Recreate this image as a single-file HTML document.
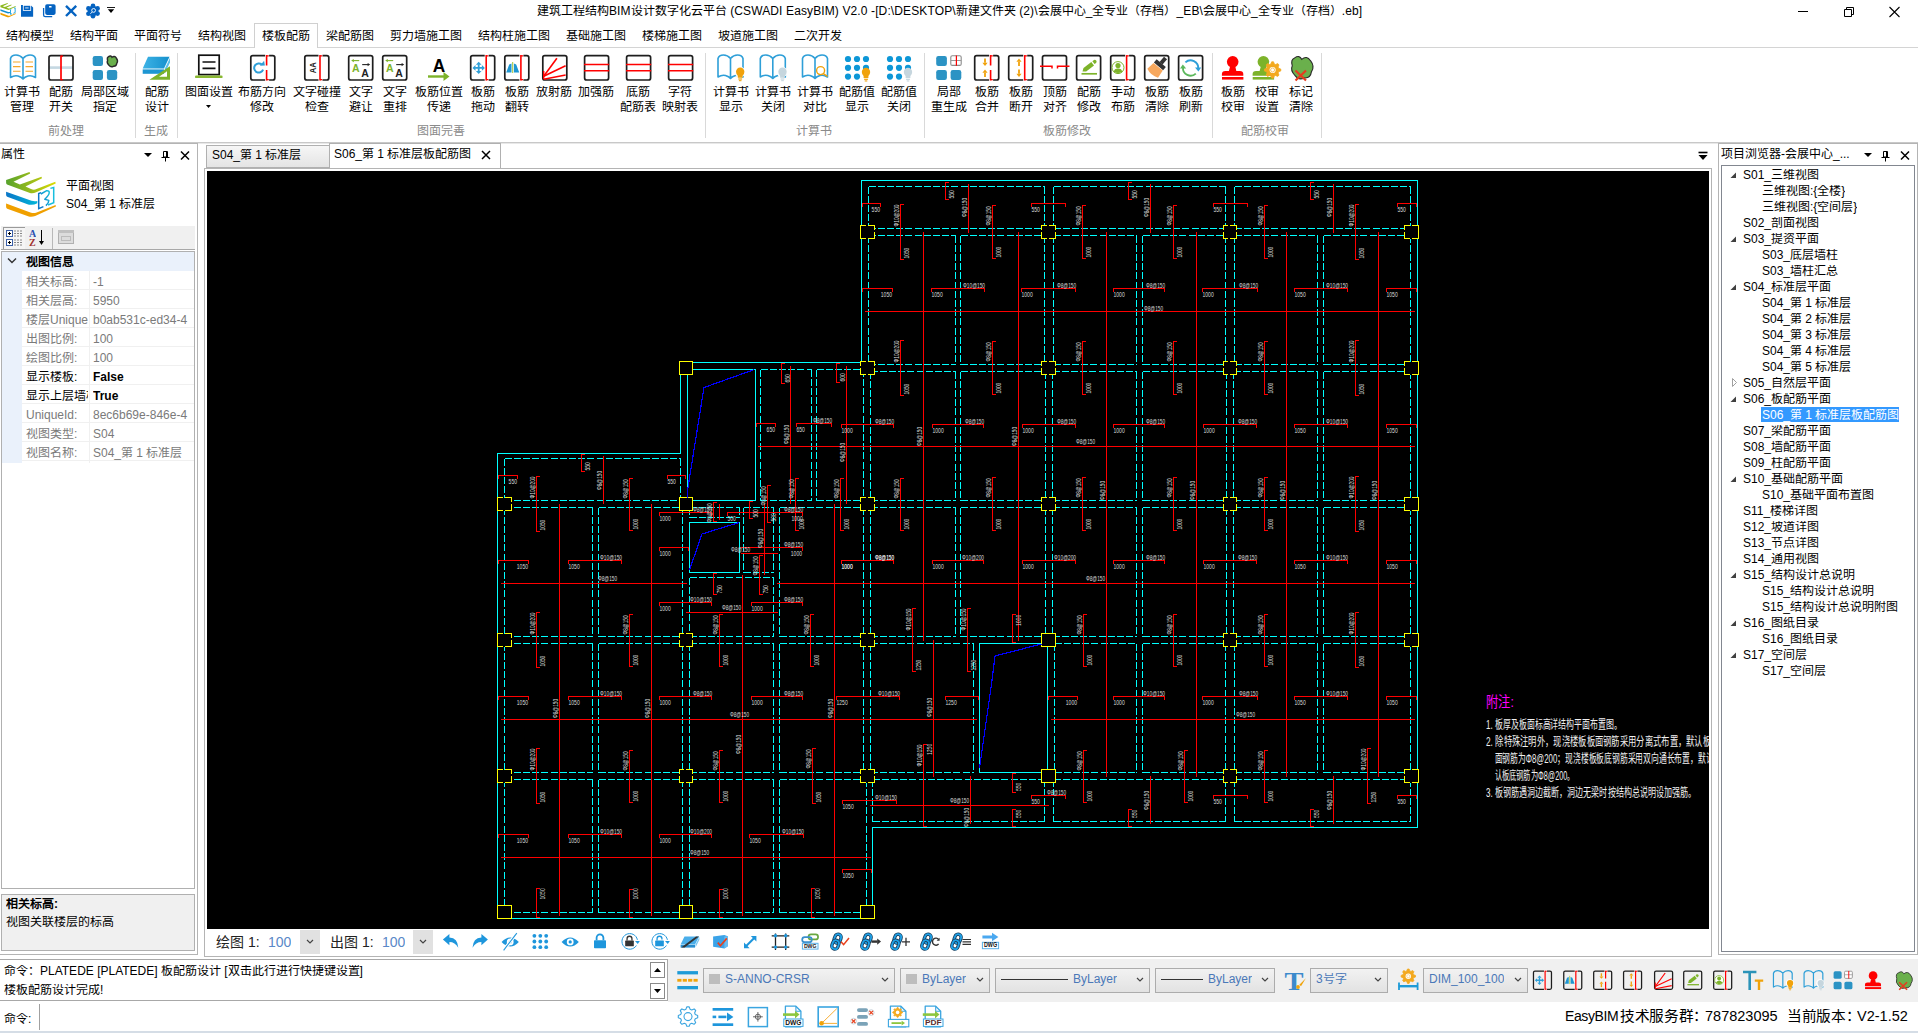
<!DOCTYPE html>
<html lang="zh-CN"><head><meta charset="utf-8"><title>EasyBIM</title>
<style>
html,body{margin:0;padding:0;}
body{width:1918px;height:1033px;overflow:hidden;background:#fff;position:relative;font-family:"Liberation Sans",sans-serif;font-size:12px;color:#000;}
.t{position:absolute;white-space:nowrap;line-height:1;overflow:hidden;}
.t i{display:inline-block;width:1em;text-align:center;font-style:normal;}
.r{position:absolute;box-sizing:border-box;}
svg{overflow:visible;}
</style></head><body>
<div class="t" style="left:537px;top:5px;font-size:12px;color:#000;height:16px;letter-spacing:0.12px;"><i>建</i><i>筑</i><i>工</i><i>程</i><i>结</i><i>构</i>BIM<i>设</i><i>计</i><i>数</i><i>字</i><i>化</i><i>云</i><i>平</i><i>台</i> (CSWADI EasyBIM) V2.0 -[D:\DESKTOP\<i>新</i><i>建</i><i>文</i><i>件</i><i>夹</i> (2)\<i>会</i><i>展</i><i>中</i><i>心</i>_<i>全</i><i>专</i><i>业</i><i>（</i><i>存</i><i>档</i><i>）</i>_EB\<i>会</i><i>展</i><i>中</i><i>心</i>_<i>全</i><i>专</i><i>业</i><i>（</i><i>存</i><i>档</i><i>）</i>.eb]</div>
<svg class="r" style="left:1790px;top:0px;" width="128" height="24"><path d="M8 11.5h10" stroke="#000" stroke-width="1" fill="none"/><path d="M54.5 9.5h7v7h-7z M56.5 9.5v-2h7v7h-2" stroke="#000" stroke-width="1" fill="none"/><path d="M99.5 7l10 10M109.5 7l-10 10" stroke="#000" stroke-width="1.1" fill="none"/></svg>
<svg class="r" style="left:0px;top:0px;" width="120" height="22"><g transform="translate(-1.5 -50.3) scale(0.31)"><path d="M6.1 180.1L29.5 171.9L30.2 174.5L13.5 182.7L19.9 184.6L41.5 176.7L42 179.3L25.5 187.6L31 189.1Q33 190 35.2 189.6L55.3 181.7L55.7 184.4L36.2 193.3Q33 194.6 30 194L7 185.6Q6.1 185 6.1 183.5Z" fill="#8cb81e"/><path d="M6.1 191.7L31.5 200.8Q34 201.6 37.3 201.1L37.3 204.3Q34 206 30.5 205.8L7.2 197.7Q6.1 197.2 6.1 195.8Z" fill="#1590d0"/><path d="M6.1 203.4L30.4 212.4Q33 213.3 36 212.8L55.6 205L55.9 207.4L35.2 217Q32 218.2 28.8 217.5L7.2 209.7Q6.1 209.2 6.1 207.8Z" fill="#f0a000"/><path d="M43.4 206.6L38.7 208.6V193.5L41 192.6M50.4 188.4L53.7 187.5V202.8L48 205" fill="none" stroke="#18a0de" stroke-width="3"/></g><path d="M21 4.9h9.4l2.7 2.7v9.2h-12.1z" fill="#0563c1"/><rect x="23.3" y="5.4" width="7.4" height="5" fill="#0563c1" stroke="#fff" stroke-width="0.8"/><rect x="25.2" y="7.2" width="3.4" height="1.4" fill="#9cc0e8"/><rect x="45.2" y="4.3" width="10.4" height="10.6" rx="1.8" fill="#0563c1"/><path d="M43.6 8v7q0 1.6 1.6 1.6h7" fill="none" stroke="#0563c1" stroke-width="1.3"/><rect x="49" y="6.1" width="2.6" height="1.3" rx="0.5" fill="#fff"/><path d="M66 5.8l10.2 10.2M76.2 5.8l-10.2 10.2" stroke="#0563c1" stroke-width="2.4" fill="none"/><circle cx="93" cy="11" r="5.4" fill="#0563c1"/><circle cx="97.6" cy="13.6" r="2.3" fill="#0563c1"/><circle cx="93.0" cy="16.3" r="2.3" fill="#0563c1"/><circle cx="88.4" cy="13.7" r="2.3" fill="#0563c1"/><circle cx="88.4" cy="8.4" r="2.3" fill="#0563c1"/><circle cx="93.0" cy="5.7" r="2.3" fill="#0563c1"/><circle cx="97.6" cy="8.4" r="2.3" fill="#0563c1"/><circle cx="93.6" cy="10.4" r="1.9" fill="#0563c1" stroke="#fff" stroke-width="0.9"/><path d="M92.2 12l-1.8 1.8" stroke="#fff" stroke-width="0.9"/><path d="M107 7.5h8" stroke="#000" stroke-width="0.9"/><path d="M107.8 9.2h6.4l-3.2 3.8z" fill="#000"/></svg>
<div class="r" style="left:0px;top:47px;width:1918px;height:1px;background:#d4d4d4;"></div>
<div class="r" style="left:254px;top:23px;width:64px;height:25px;background:#fff;border:1px solid #d0d0d0;border-bottom:none;"></div>
<div class="t" style="left:6px;top:30px;font-size:12px;color:#000;height:14px;"><i>结</i><i>构</i><i>模</i><i>型</i></div>
<div class="t" style="left:70px;top:30px;font-size:12px;color:#000;height:14px;"><i>结</i><i>构</i><i>平</i><i>面</i></div>
<div class="t" style="left:134px;top:30px;font-size:12px;color:#000;height:14px;"><i>平</i><i>面</i><i>符</i><i>号</i></div>
<div class="t" style="left:198px;top:30px;font-size:12px;color:#000;height:14px;"><i>结</i><i>构</i><i>视</i><i>图</i></div>
<div class="t" style="left:262px;top:30px;font-size:12px;color:#000;height:14px;"><i>楼</i><i>板</i><i>配</i><i>筋</i></div>
<div class="t" style="left:326px;top:30px;font-size:12px;color:#000;height:14px;"><i>梁</i><i>配</i><i>筋</i><i>图</i></div>
<div class="t" style="left:390px;top:30px;font-size:12px;color:#000;height:14px;"><i>剪</i><i>力</i><i>墙</i><i>施</i><i>工</i><i>图</i></div>
<div class="t" style="left:478px;top:30px;font-size:12px;color:#000;height:14px;"><i>结</i><i>构</i><i>柱</i><i>施</i><i>工</i><i>图</i></div>
<div class="t" style="left:566px;top:30px;font-size:12px;color:#000;height:14px;"><i>基</i><i>础</i><i>施</i><i>工</i><i>图</i></div>
<div class="t" style="left:642px;top:30px;font-size:12px;color:#000;height:14px;"><i>楼</i><i>梯</i><i>施</i><i>工</i><i>图</i></div>
<div class="t" style="left:718px;top:30px;font-size:12px;color:#000;height:14px;"><i>坡</i><i>道</i><i>施</i><i>工</i><i>图</i></div>
<div class="t" style="left:794px;top:30px;font-size:12px;color:#000;height:14px;"><i>二</i><i>次</i><i>开</i><i>发</i></div>
<div class="r" style="left:0px;top:142px;width:1918px;height:1px;background:#c8c8c8;"></div>
<div class="r" style="left:0px;top:143px;width:1918px;height:1px;background:#e8e8e8;"></div>
<div class="r" style="left:135px;top:53px;width:1px;height:85px;background:#d9d9d9;"></div>
<div class="r" style="left:177px;top:53px;width:1px;height:85px;background:#d9d9d9;"></div>
<div class="r" style="left:705px;top:53px;width:1px;height:85px;background:#d9d9d9;"></div>
<div class="r" style="left:924px;top:53px;width:1px;height:85px;background:#d9d9d9;"></div>
<div class="r" style="left:1212px;top:53px;width:1px;height:85px;background:#d9d9d9;"></div>
<div class="r" style="left:1321px;top:53px;width:1px;height:85px;background:#d9d9d9;"></div>
<div class="t" style="left:26px;top:125px;font-size:12px;color:#8a8a8a;width:80px;text-align:center;height:14px;"><i>前</i><i>处</i><i>理</i></div>
<div class="t" style="left:116px;top:125px;font-size:12px;color:#8a8a8a;width:80px;text-align:center;height:14px;"><i>生</i><i>成</i></div>
<div class="t" style="left:401px;top:125px;font-size:12px;color:#8a8a8a;width:80px;text-align:center;height:14px;"><i>图</i><i>面</i><i>完</i><i>善</i></div>
<div class="t" style="left:774px;top:125px;font-size:12px;color:#8a8a8a;width:80px;text-align:center;height:14px;"><i>计</i><i>算</i><i>书</i></div>
<div class="t" style="left:1027px;top:125px;font-size:12px;color:#8a8a8a;width:80px;text-align:center;height:14px;"><i>板</i><i>筋</i><i>修</i><i>改</i></div>
<div class="t" style="left:1225px;top:125px;font-size:12px;color:#8a8a8a;width:80px;text-align:center;height:14px;"><i>配</i><i>筋</i><i>校</i><i>审</i></div>
<div class="t" style="left:-8px;top:86px;font-size:12px;color:#000;width:60px;text-align:center;height:14px;"><i>计</i><i>算</i><i>书</i></div>
<div class="t" style="left:-8px;top:101px;font-size:12px;color:#000;width:60px;text-align:center;height:14px;"><i>管</i><i>理</i></div>
<div class="t" style="left:31px;top:86px;font-size:12px;color:#000;width:60px;text-align:center;height:14px;"><i>配</i><i>筋</i></div>
<div class="t" style="left:31px;top:101px;font-size:12px;color:#000;width:60px;text-align:center;height:14px;"><i>开</i><i>关</i></div>
<div class="t" style="left:75px;top:86px;font-size:12px;color:#000;width:60px;text-align:center;height:14px;"><i>局</i><i>部</i><i>区</i><i>域</i></div>
<div class="t" style="left:75px;top:101px;font-size:12px;color:#000;width:60px;text-align:center;height:14px;"><i>指</i><i>定</i></div>
<div class="t" style="left:127px;top:86px;font-size:12px;color:#000;width:60px;text-align:center;height:14px;"><i>配</i><i>筋</i></div>
<div class="t" style="left:127px;top:101px;font-size:12px;color:#000;width:60px;text-align:center;height:14px;"><i>设</i><i>计</i></div>
<div class="t" style="left:179px;top:86px;font-size:12px;color:#000;width:60px;text-align:center;height:14px;"><i>图</i><i>面</i><i>设</i><i>置</i></div>
<svg class="r" style="left:206px;top:105px;" width="6" height="4"><path d="M0 0h5l-2.5 3z" fill="#000"/></svg>
<div class="t" style="left:232px;top:86px;font-size:12px;color:#000;width:60px;text-align:center;height:14px;"><i>布</i><i>筋</i><i>方</i><i>向</i></div>
<div class="t" style="left:232px;top:101px;font-size:12px;color:#000;width:60px;text-align:center;height:14px;"><i>修</i><i>改</i></div>
<div class="t" style="left:287px;top:86px;font-size:12px;color:#000;width:60px;text-align:center;height:14px;"><i>文</i><i>字</i><i>碰</i><i>撞</i></div>
<div class="t" style="left:287px;top:101px;font-size:12px;color:#000;width:60px;text-align:center;height:14px;"><i>检</i><i>查</i></div>
<div class="t" style="left:331px;top:86px;font-size:12px;color:#000;width:60px;text-align:center;height:14px;"><i>文</i><i>字</i></div>
<div class="t" style="left:331px;top:101px;font-size:12px;color:#000;width:60px;text-align:center;height:14px;"><i>避</i><i>让</i></div>
<div class="t" style="left:365px;top:86px;font-size:12px;color:#000;width:60px;text-align:center;height:14px;"><i>文</i><i>字</i></div>
<div class="t" style="left:365px;top:101px;font-size:12px;color:#000;width:60px;text-align:center;height:14px;"><i>重</i><i>排</i></div>
<div class="t" style="left:409px;top:86px;font-size:12px;color:#000;width:60px;text-align:center;height:14px;"><i>板</i><i>筋</i><i>位</i><i>置</i></div>
<div class="t" style="left:409px;top:101px;font-size:12px;color:#000;width:60px;text-align:center;height:14px;"><i>传</i><i>递</i></div>
<div class="t" style="left:453px;top:86px;font-size:12px;color:#000;width:60px;text-align:center;height:14px;"><i>板</i><i>筋</i></div>
<div class="t" style="left:453px;top:101px;font-size:12px;color:#000;width:60px;text-align:center;height:14px;"><i>拖</i><i>动</i></div>
<div class="t" style="left:487px;top:86px;font-size:12px;color:#000;width:60px;text-align:center;height:14px;"><i>板</i><i>筋</i></div>
<div class="t" style="left:487px;top:101px;font-size:12px;color:#000;width:60px;text-align:center;height:14px;"><i>翻</i><i>转</i></div>
<div class="t" style="left:524px;top:86px;font-size:12px;color:#000;width:60px;text-align:center;height:14px;"><i>放</i><i>射</i><i>筋</i></div>
<div class="t" style="left:566px;top:86px;font-size:12px;color:#000;width:60px;text-align:center;height:14px;"><i>加</i><i>强</i><i>筋</i></div>
<div class="t" style="left:608px;top:86px;font-size:12px;color:#000;width:60px;text-align:center;height:14px;"><i>底</i><i>筋</i></div>
<div class="t" style="left:608px;top:101px;font-size:12px;color:#000;width:60px;text-align:center;height:14px;"><i>配</i><i>筋</i><i>表</i></div>
<div class="t" style="left:650px;top:86px;font-size:12px;color:#000;width:60px;text-align:center;height:14px;"><i>字</i><i>符</i></div>
<div class="t" style="left:650px;top:101px;font-size:12px;color:#000;width:60px;text-align:center;height:14px;"><i>映</i><i>射</i><i>表</i></div>
<div class="t" style="left:701px;top:86px;font-size:12px;color:#000;width:60px;text-align:center;height:14px;"><i>计</i><i>算</i><i>书</i></div>
<div class="t" style="left:701px;top:101px;font-size:12px;color:#000;width:60px;text-align:center;height:14px;"><i>显</i><i>示</i></div>
<div class="t" style="left:743px;top:86px;font-size:12px;color:#000;width:60px;text-align:center;height:14px;"><i>计</i><i>算</i><i>书</i></div>
<div class="t" style="left:743px;top:101px;font-size:12px;color:#000;width:60px;text-align:center;height:14px;"><i>关</i><i>闭</i></div>
<div class="t" style="left:785px;top:86px;font-size:12px;color:#000;width:60px;text-align:center;height:14px;"><i>计</i><i>算</i><i>书</i></div>
<div class="t" style="left:785px;top:101px;font-size:12px;color:#000;width:60px;text-align:center;height:14px;"><i>对</i><i>比</i></div>
<div class="t" style="left:827px;top:86px;font-size:12px;color:#000;width:60px;text-align:center;height:14px;"><i>配</i><i>筋</i><i>值</i></div>
<div class="t" style="left:827px;top:101px;font-size:12px;color:#000;width:60px;text-align:center;height:14px;"><i>显</i><i>示</i></div>
<div class="t" style="left:869px;top:86px;font-size:12px;color:#000;width:60px;text-align:center;height:14px;"><i>配</i><i>筋</i><i>值</i></div>
<div class="t" style="left:869px;top:101px;font-size:12px;color:#000;width:60px;text-align:center;height:14px;"><i>关</i><i>闭</i></div>
<div class="t" style="left:919px;top:86px;font-size:12px;color:#000;width:60px;text-align:center;height:14px;"><i>局</i><i>部</i></div>
<div class="t" style="left:919px;top:101px;font-size:12px;color:#000;width:60px;text-align:center;height:14px;"><i>重</i><i>生</i><i>成</i></div>
<div class="t" style="left:957px;top:86px;font-size:12px;color:#000;width:60px;text-align:center;height:14px;"><i>板</i><i>筋</i></div>
<div class="t" style="left:957px;top:101px;font-size:12px;color:#000;width:60px;text-align:center;height:14px;"><i>合</i><i>并</i></div>
<div class="t" style="left:991px;top:86px;font-size:12px;color:#000;width:60px;text-align:center;height:14px;"><i>板</i><i>筋</i></div>
<div class="t" style="left:991px;top:101px;font-size:12px;color:#000;width:60px;text-align:center;height:14px;"><i>断</i><i>开</i></div>
<div class="t" style="left:1025px;top:86px;font-size:12px;color:#000;width:60px;text-align:center;height:14px;"><i>顶</i><i>筋</i></div>
<div class="t" style="left:1025px;top:101px;font-size:12px;color:#000;width:60px;text-align:center;height:14px;"><i>对</i><i>齐</i></div>
<div class="t" style="left:1059px;top:86px;font-size:12px;color:#000;width:60px;text-align:center;height:14px;"><i>配</i><i>筋</i></div>
<div class="t" style="left:1059px;top:101px;font-size:12px;color:#000;width:60px;text-align:center;height:14px;"><i>修</i><i>改</i></div>
<div class="t" style="left:1093px;top:86px;font-size:12px;color:#000;width:60px;text-align:center;height:14px;"><i>手</i><i>动</i></div>
<div class="t" style="left:1093px;top:101px;font-size:12px;color:#000;width:60px;text-align:center;height:14px;"><i>布</i><i>筋</i></div>
<div class="t" style="left:1127px;top:86px;font-size:12px;color:#000;width:60px;text-align:center;height:14px;"><i>板</i><i>筋</i></div>
<div class="t" style="left:1127px;top:101px;font-size:12px;color:#000;width:60px;text-align:center;height:14px;"><i>清</i><i>除</i></div>
<div class="t" style="left:1161px;top:86px;font-size:12px;color:#000;width:60px;text-align:center;height:14px;"><i>板</i><i>筋</i></div>
<div class="t" style="left:1161px;top:101px;font-size:12px;color:#000;width:60px;text-align:center;height:14px;"><i>刷</i><i>新</i></div>
<div class="t" style="left:1203px;top:86px;font-size:12px;color:#000;width:60px;text-align:center;height:14px;"><i>板</i><i>筋</i></div>
<div class="t" style="left:1203px;top:101px;font-size:12px;color:#000;width:60px;text-align:center;height:14px;"><i>校</i><i>审</i></div>
<div class="t" style="left:1237px;top:86px;font-size:12px;color:#000;width:60px;text-align:center;height:14px;"><i>校</i><i>审</i></div>
<div class="t" style="left:1237px;top:101px;font-size:12px;color:#000;width:60px;text-align:center;height:14px;"><i>设</i><i>置</i></div>
<div class="t" style="left:1271px;top:86px;font-size:12px;color:#000;width:60px;text-align:center;height:14px;"><i>标</i><i>记</i></div>
<div class="t" style="left:1271px;top:101px;font-size:12px;color:#000;width:60px;text-align:center;height:14px;"><i>清</i><i>除</i></div>
<div class="r" style="left:0px;top:143px;width:198px;height:812px;background:#fff;border:1px solid #b4b4b4;border-left:none;"></div>
<div class="t" style="left:1px;top:148px;font-size:12px;color:#000;height:14px;"><i>属</i><i>性</i></div>
<svg class="r" style="left:144px;top:150px;" width="50" height="14"><path d="M0 3h8l-4 4z" fill="#000"/><path d="M19.5 1.5h4v5.5h-4z M17.5 7.5h8 M21.5 7.5v4" stroke="#000" stroke-width="1" fill="none"/><path d="M22.5 1.5v6" stroke="#000" stroke-width="1"/><path d="M37 1.5l8 8M45 1.5l-8 8" stroke="#000" stroke-width="1.5" fill="none"/></svg>
<svg class="r" style="left:0;top:0" width="70" height="225"><defs><linearGradient id="lgG" x1="0" y1="0" x2="1" y2="0"><stop offset="0" stop-color="#56a22c"/><stop offset="0.55" stop-color="#9fbe1a"/><stop offset="1" stop-color="#dcdc00"/></linearGradient><linearGradient id="lgB" x1="0" y1="0" x2="1" y2="0"><stop offset="0" stop-color="#0b76c8"/><stop offset="1" stop-color="#00b6d8"/></linearGradient><linearGradient id="lgC" x1="0" y1="1" x2="1" y2="0"><stop offset="0" stop-color="#0b76c8"/><stop offset="1" stop-color="#18c0dc"/></linearGradient></defs><path d="M6.1 180.1L29.5 171.9L30.2 173.5L13.5 181.7L19.9 184.6L41.5 176.7L42 178.3L25.5 186.6L31 189.1Q33 190 35.2 189.6L55.3 181.7L55.7 183.4L36.2 192.3Q33 193.6 30 193L7 184.6Q6.1 184 6.1 182.5Z" fill="url(#lgG)"/><path d="M6.1 191.7L31.5 200.8Q34 201.6 37.3 201.1L37.3 203.3Q34 205 30.5 204.8Q29 204.8 27.5 204.3L7.2 196.7Q6.1 196.2 6.1 194.8Z" fill="url(#lgB)"/><path d="M6.1 203.4L30.4 212.4Q33 213.3 36 212.8L55.6 205L55.9 206.4L35.2 216Q32 217.2 28.8 216.5L7.2 208.7Q6.1 208.2 6.1 206.8Z" fill="#f0a000"/><path d="M43.4 206.6L38.7 208.6V193.5L41 192.6" fill="none" stroke="#0b76c8" stroke-width="1.5"/><path d="M50.4 188.4L53.7 187.5V202.8L48 205" fill="none" stroke="#18bede" stroke-width="1.5"/><path d="M40.8 194L46.3 190.8Q49.6 190.4 49.2 193Q48.8 195.4 44.8 199.2L48.8 200.4Q48.8 203 45.9 205.6" fill="none" stroke="url(#lgC)" stroke-width="1.5" stroke-linejoin="round"/></svg>
<div class="t" style="left:66px;top:180px;font-size:12px;color:#000;height:14px;"><i>平</i><i>面</i><i>视</i><i>图</i></div>
<div class="t" style="left:66px;top:198px;font-size:12px;color:#000;height:14px;">S04_<i>第</i> 1 <i>标</i><i>准</i><i>层</i></div>
<div class="r" style="left:1px;top:226px;width:194px;height:23px;background:#f0f0f0;"></div>
<div class="r" style="left:1px;top:249px;width:194px;height:1px;background:#a8a8a8;"></div>
<div class="r" style="left:3px;top:227px;width:22px;height:22px;background:#f5f5f5;border-top:1px solid #9a9a9a;border-left:1px solid #9a9a9a;"></div>
<svg class="r" style="left:6px;top:229px;" width="18" height="20"><rect x="0.5" y="1.5" width="6" height="6" fill="#fff" stroke="#3a5fa8" stroke-width="1"/><path d="M2 4.5h3M3.5 3v3" stroke="#000" stroke-width="1"/><path d="M8 2.0h8" stroke="#888" stroke-width="1" stroke-dasharray="2 1"/><path d="M8 4.5h8" stroke="#888" stroke-width="1" stroke-dasharray="2 1"/><path d="M8 7.0h8" stroke="#888" stroke-width="1" stroke-dasharray="2 1"/><rect x="0.5" y="10.5" width="6" height="6" fill="#fff" stroke="#3a5fa8" stroke-width="1"/><path d="M2 13.5h3M3.5 12v3" stroke="#000" stroke-width="1"/><path d="M8 11.0h8" stroke="#888" stroke-width="1" stroke-dasharray="2 1"/><path d="M8 13.5h8" stroke="#888" stroke-width="1" stroke-dasharray="2 1"/><path d="M8 16.0h8" stroke="#888" stroke-width="1" stroke-dasharray="2 1"/></svg>
<div class="t" style="left:29px;top:229px;font-size:10px;color:#2b4fb0;font-weight:bold;font-family:'Liberation Serif',serif;">A</div>
<div class="t" style="left:29px;top:238px;font-size:10px;color:#a03030;font-weight:bold;font-family:'Liberation Serif',serif;">Z</div>
<svg class="r" style="left:38px;top:229px;" width="8" height="18"><path d="M3.5 1v13" stroke="#000" stroke-width="1"/><path d="M1 12h5l-2.5 4z" fill="#000"/></svg>
<div class="r" style="left:52px;top:228px;width:1px;height:21px;background:#b8b8b8;"></div>
<div class="r" style="left:58px;top:230px;width:16px;height:14px;background:#dcdcdc;border:1px solid #b0b0b0;"></div>
<div class="r" style="left:58px;top:230px;width:16px;height:3px;background:#c0c0c0;"></div>
<div class="r" style="left:61px;top:236px;width:10px;height:5px;border:1px solid #bbb;"></div>
<div class="r" style="left:1px;top:251px;width:194px;height:638px;background:#fff;border:1px solid #b0b0b0;"></div>
<div class="r" style="left:2px;top:252px;width:192px;height:19px;background:#eaf1fb;"></div>
<div class="r" style="left:2px;top:271px;width:20px;height:192px;background:#eaf1fb;"></div>
<svg class="r" style="left:7px;top:257px;" width="10" height="8"><path d="M1 1.5l4 4 4-4" stroke="#333" stroke-width="1.4" fill="none"/></svg>
<div class="t" style="left:26px;top:256px;font-size:12px;color:#000;font-weight:bold;height:14px;"><i>视</i><i>图</i><i>信</i><i>息</i></div>
<div class="t" style="left:26px;top:276px;font-size:12px;color:#7a7a7a;width:62px;height:14px;"><i>相</i><i>关</i><i>标</i><i>高</i>:</div>
<div class="t" style="left:93px;top:276px;font-size:12px;color:#7a7a7a;width:101px;height:14px;">-1</div>
<div class="r" style="left:22px;top:289px;width:172px;height:1px;background:#f0f0f0;"></div>
<div class="t" style="left:26px;top:295px;font-size:12px;color:#7a7a7a;width:62px;height:14px;"><i>相</i><i>关</i><i>层</i><i>高</i>:</div>
<div class="t" style="left:93px;top:295px;font-size:12px;color:#7a7a7a;width:101px;height:14px;">5950</div>
<div class="r" style="left:22px;top:308px;width:172px;height:1px;background:#f0f0f0;"></div>
<div class="t" style="left:26px;top:314px;font-size:12px;color:#7a7a7a;width:62px;height:14px;"><i>楼</i><i>层</i>UniqueId</div>
<div class="t" style="left:93px;top:314px;font-size:12px;color:#7a7a7a;width:101px;height:14px;">b0ab531c-ed34-4</div>
<div class="r" style="left:22px;top:327px;width:172px;height:1px;background:#f0f0f0;"></div>
<div class="t" style="left:26px;top:333px;font-size:12px;color:#7a7a7a;width:62px;height:14px;"><i>出</i><i>图</i><i>比</i><i>例</i>:</div>
<div class="t" style="left:93px;top:333px;font-size:12px;color:#7a7a7a;width:101px;height:14px;">100</div>
<div class="r" style="left:22px;top:346px;width:172px;height:1px;background:#f0f0f0;"></div>
<div class="t" style="left:26px;top:352px;font-size:12px;color:#7a7a7a;width:62px;height:14px;"><i>绘</i><i>图</i><i>比</i><i>例</i>:</div>
<div class="t" style="left:93px;top:352px;font-size:12px;color:#7a7a7a;width:101px;height:14px;">100</div>
<div class="r" style="left:22px;top:365px;width:172px;height:1px;background:#f0f0f0;"></div>
<div class="t" style="left:26px;top:371px;font-size:12px;color:#000;width:62px;height:14px;"><i>显</i><i>示</i><i>楼</i><i>板</i>:</div>
<div class="t" style="left:93px;top:371px;font-size:12px;color:#000;font-weight:bold;width:101px;height:14px;">False</div>
<div class="r" style="left:22px;top:384px;width:172px;height:1px;background:#f0f0f0;"></div>
<div class="t" style="left:26px;top:390px;font-size:12px;color:#000;width:62px;height:14px;"><i>显</i><i>示</i><i>上</i><i>层</i><i>墙</i><i>柱</i></div>
<div class="t" style="left:93px;top:390px;font-size:12px;color:#000;font-weight:bold;width:101px;height:14px;">True</div>
<div class="r" style="left:22px;top:403px;width:172px;height:1px;background:#f0f0f0;"></div>
<div class="t" style="left:26px;top:409px;font-size:12px;color:#7a7a7a;width:62px;height:14px;">UniqueId:</div>
<div class="t" style="left:93px;top:409px;font-size:12px;color:#7a7a7a;width:101px;height:14px;">8ec6b69e-846e-4</div>
<div class="r" style="left:22px;top:422px;width:172px;height:1px;background:#f0f0f0;"></div>
<div class="t" style="left:26px;top:428px;font-size:12px;color:#7a7a7a;width:62px;height:14px;"><i>视</i><i>图</i><i>类</i><i>型</i>:</div>
<div class="t" style="left:93px;top:428px;font-size:12px;color:#7a7a7a;width:101px;height:14px;">S04</div>
<div class="r" style="left:22px;top:441px;width:172px;height:1px;background:#f0f0f0;"></div>
<div class="t" style="left:26px;top:447px;font-size:12px;color:#7a7a7a;width:62px;height:14px;"><i>视</i><i>图</i><i>名</i><i>称</i>:</div>
<div class="t" style="left:93px;top:447px;font-size:12px;color:#7a7a7a;width:101px;height:14px;">S04_<i>第</i> 1 <i>标</i><i>准</i><i>层</i></div>
<div class="r" style="left:22px;top:460px;width:172px;height:1px;background:#f0f0f0;"></div>
<div class="r" style="left:89px;top:271px;width:1px;height:192px;background:#f0f0f0;"></div>
<div class="r" style="left:1px;top:894px;width:194px;height:57px;background:#f0f0f0;border:1px solid #b0b0b0;"></div>
<div class="t" style="left:6px;top:898px;font-size:12px;color:#000;font-weight:bold;height:14px;"><i>相</i><i>关</i><i>标</i><i>高</i>:</div>
<div class="t" style="left:6px;top:916px;font-size:12px;color:#000;height:14px;"><i>视</i><i>图</i><i>关</i><i>联</i><i>楼</i><i>层</i><i>的</i><i>标</i><i>高</i></div>
<div class="r" style="left:1718px;top:143px;width:200px;height:812px;background:#fff;border:1px solid #b4b4b4;"></div>
<div class="t" style="left:1721px;top:148px;font-size:12px;color:#000;width:135px;height:14px;"><i>项</i><i>目</i><i>浏</i><i>览</i><i>器</i>-<i>会</i><i>展</i><i>中</i><i>心</i>_...</div>
<svg class="r" style="left:1864px;top:150px;" width="50" height="14"><path d="M0 3h8l-4 4z" fill="#000"/><path d="M19.5 1.5h4v5.5h-4z M17.5 7.5h8 M21.5 7.5v4" stroke="#000" stroke-width="1" fill="none"/><path d="M22.5 1.5v6" stroke="#000" stroke-width="1"/><path d="M37 1.5l8 8M45 1.5l-8 8" stroke="#000" stroke-width="1.5" fill="none"/></svg>
<div class="r" style="left:1721px;top:165px;width:194px;height:787px;background:#fff;border:1px solid #828790;"></div>
<div class="t" style="left:1743px;top:169px;font-size:12px;color:#000;height:14px;">S01_<i>三</i><i>维</i><i>视</i><i>图</i></div>
<svg class="r" style="left:1730px;top:172px;" width="7" height="7"><path d="M6 0.5v5.5h-5.5z" fill="#404040"/></svg>
<div class="t" style="left:1762px;top:185px;font-size:12px;color:#000;height:14px;"><i>三</i><i>维</i><i>视</i><i>图</i>:{<i>全</i><i>楼</i>}</div>
<div class="t" style="left:1762px;top:201px;font-size:12px;color:#000;height:14px;"><i>三</i><i>维</i><i>视</i><i>图</i>:{<i>空</i><i>间</i><i>层</i>}</div>
<div class="t" style="left:1743px;top:217px;font-size:12px;color:#000;height:14px;">S02_<i>剖</i><i>面</i><i>视</i><i>图</i></div>
<div class="t" style="left:1743px;top:233px;font-size:12px;color:#000;height:14px;">S03_<i>提</i><i>资</i><i>平</i><i>面</i></div>
<svg class="r" style="left:1730px;top:236px;" width="7" height="7"><path d="M6 0.5v5.5h-5.5z" fill="#404040"/></svg>
<div class="t" style="left:1762px;top:249px;font-size:12px;color:#000;height:14px;">S03_<i>底</i><i>层</i><i>墙</i><i>柱</i></div>
<div class="t" style="left:1762px;top:265px;font-size:12px;color:#000;height:14px;">S03_<i>墙</i><i>柱</i><i>汇</i><i>总</i></div>
<div class="t" style="left:1743px;top:281px;font-size:12px;color:#000;height:14px;">S04_<i>标</i><i>准</i><i>层</i><i>平</i><i>面</i></div>
<svg class="r" style="left:1730px;top:284px;" width="7" height="7"><path d="M6 0.5v5.5h-5.5z" fill="#404040"/></svg>
<div class="t" style="left:1762px;top:297px;font-size:12px;color:#000;height:14px;">S04_<i>第</i> 1 <i>标</i><i>准</i><i>层</i></div>
<div class="t" style="left:1762px;top:313px;font-size:12px;color:#000;height:14px;">S04_<i>第</i> 2 <i>标</i><i>准</i><i>层</i></div>
<div class="t" style="left:1762px;top:329px;font-size:12px;color:#000;height:14px;">S04_<i>第</i> 3 <i>标</i><i>准</i><i>层</i></div>
<div class="t" style="left:1762px;top:345px;font-size:12px;color:#000;height:14px;">S04_<i>第</i> 4 <i>标</i><i>准</i><i>层</i></div>
<div class="t" style="left:1762px;top:361px;font-size:12px;color:#000;height:14px;">S04_<i>第</i> 5 <i>标</i><i>准</i><i>层</i></div>
<div class="t" style="left:1743px;top:377px;font-size:12px;color:#000;height:14px;">S05_<i>自</i><i>然</i><i>层</i><i>平</i><i>面</i></div>
<svg class="r" style="left:1732px;top:378px;" width="6" height="10"><path d="M0.5 0.5l4 4-4 4z" fill="#fff" stroke="#a0a0a0" stroke-width="1"/></svg>
<div class="t" style="left:1743px;top:393px;font-size:12px;color:#000;height:14px;">S06_<i>板</i><i>配</i><i>筋</i><i>平</i><i>面</i></div>
<svg class="r" style="left:1730px;top:396px;" width="7" height="7"><path d="M6 0.5v5.5h-5.5z" fill="#404040"/></svg>
<div class="r" style="left:1761px;top:407px;width:138px;height:15px;background:#3399ff;"></div>
<div class="t" style="left:1762px;top:409px;font-size:12px;color:#fff;height:14px;">S06_<i>第</i> 1 <i>标</i><i>准</i><i>层</i><i>板</i><i>配</i><i>筋</i><i>图</i></div>
<div class="t" style="left:1743px;top:425px;font-size:12px;color:#000;height:14px;">S07_<i>梁</i><i>配</i><i>筋</i><i>平</i><i>面</i></div>
<div class="t" style="left:1743px;top:441px;font-size:12px;color:#000;height:14px;">S08_<i>墙</i><i>配</i><i>筋</i><i>平</i><i>面</i></div>
<div class="t" style="left:1743px;top:457px;font-size:12px;color:#000;height:14px;">S09_<i>柱</i><i>配</i><i>筋</i><i>平</i><i>面</i></div>
<div class="t" style="left:1743px;top:473px;font-size:12px;color:#000;height:14px;">S10_<i>基</i><i>础</i><i>配</i><i>筋</i><i>平</i><i>面</i></div>
<svg class="r" style="left:1730px;top:476px;" width="7" height="7"><path d="M6 0.5v5.5h-5.5z" fill="#404040"/></svg>
<div class="t" style="left:1762px;top:489px;font-size:12px;color:#000;height:14px;">S10_<i>基</i><i>础</i><i>平</i><i>面</i><i>布</i><i>置</i><i>图</i></div>
<div class="t" style="left:1743px;top:505px;font-size:12px;color:#000;height:14px;">S11_<i>楼</i><i>梯</i><i>详</i><i>图</i></div>
<div class="t" style="left:1743px;top:521px;font-size:12px;color:#000;height:14px;">S12_<i>坡</i><i>道</i><i>详</i><i>图</i></div>
<div class="t" style="left:1743px;top:537px;font-size:12px;color:#000;height:14px;">S13_<i>节</i><i>点</i><i>详</i><i>图</i></div>
<div class="t" style="left:1743px;top:553px;font-size:12px;color:#000;height:14px;">S14_<i>通</i><i>用</i><i>视</i><i>图</i></div>
<div class="t" style="left:1743px;top:569px;font-size:12px;color:#000;height:14px;">S15_<i>结</i><i>构</i><i>设</i><i>计</i><i>总</i><i>说</i><i>明</i></div>
<svg class="r" style="left:1730px;top:572px;" width="7" height="7"><path d="M6 0.5v5.5h-5.5z" fill="#404040"/></svg>
<div class="t" style="left:1762px;top:585px;font-size:12px;color:#000;height:14px;">S15_<i>结</i><i>构</i><i>设</i><i>计</i><i>总</i><i>说</i><i>明</i></div>
<div class="t" style="left:1762px;top:601px;font-size:12px;color:#000;height:14px;">S15_<i>结</i><i>构</i><i>设</i><i>计</i><i>总</i><i>说</i><i>明</i><i>附</i><i>图</i></div>
<div class="t" style="left:1743px;top:617px;font-size:12px;color:#000;height:14px;">S16_<i>图</i><i>纸</i><i>目</i><i>录</i></div>
<svg class="r" style="left:1730px;top:620px;" width="7" height="7"><path d="M6 0.5v5.5h-5.5z" fill="#404040"/></svg>
<div class="t" style="left:1762px;top:633px;font-size:12px;color:#000;height:14px;">S16_<i>图</i><i>纸</i><i>目</i><i>录</i></div>
<div class="t" style="left:1743px;top:649px;font-size:12px;color:#000;height:14px;">S17_<i>空</i><i>间</i><i>层</i></div>
<svg class="r" style="left:1730px;top:652px;" width="7" height="7"><path d="M6 0.5v5.5h-5.5z" fill="#404040"/></svg>
<div class="t" style="left:1762px;top:665px;font-size:12px;color:#000;height:14px;">S17_<i>空</i><i>间</i><i>层</i></div>
<div class="r" style="left:206px;top:145px;width:124px;height:23px;background:linear-gradient(#f6f6f6,#e4e4e4);border:1px solid #b0b0b0;"></div>
<div class="t" style="left:212px;top:149px;font-size:12px;color:#000;height:14px;">S04_<i>第</i> 1 <i>标</i><i>准</i><i>层</i></div>
<div class="r" style="left:329px;top:143px;width:172px;height:26px;background:#fff;border:1px solid #b0b0b0;border-bottom:none;"></div>
<div class="t" style="left:334px;top:148px;font-size:12px;color:#000;height:14px;">S06_<i>第</i> 1 <i>标</i><i>准</i><i>层</i><i>板</i><i>配</i><i>筋</i><i>图</i></div>
<svg class="r" style="left:481px;top:150px;" width="10" height="10"><path d="M1 1l8 8M9 1l-8 8" stroke="#000" stroke-width="1.5"/></svg>
<svg class="r" style="left:1698px;top:151px;" width="10" height="10"><path d="M0.5 1.5h9" stroke="#000" stroke-width="1.6"/><path d="M0.5 4h9l-4.5 5z" fill="#000"/></svg>
<div class="r" style="left:204px;top:168px;width:1508px;height:789px;background:#fff;border:1px solid #b4b4b4;"></div>
<div class="r" style="left:207px;top:171px;width:1502px;height:758px;background:#000;"></div>
<div class="t" style="left:216px;top:935px;font-size:14px;color:#222;height:16px;"><i>绘</i><i>图</i> 1:</div>
<div class="t" style="left:268px;top:935px;font-size:14px;color:#5a88c8;height:16px;">100</div>
<div class="r" style="left:300px;top:930px;width:20px;height:24px;background:#e1e1e1;"></div>
<svg class="r" style="left:306px;top:939px;" width="8" height="6"><path d="M1 1l3 3 3-3" stroke="#444" stroke-width="1.2" fill="none"/></svg>
<div class="t" style="left:330px;top:935px;font-size:14px;color:#222;height:16px;"><i>出</i><i>图</i> 1:</div>
<div class="t" style="left:382px;top:935px;font-size:14px;color:#5a88c8;height:16px;">100</div>
<div class="r" style="left:413px;top:930px;width:20px;height:24px;background:#e1e1e1;"></div>
<svg class="r" style="left:419px;top:939px;" width="8" height="6"><path d="M1 1l3 3 3-3" stroke="#444" stroke-width="1.2" fill="none"/></svg>
<div class="r" style="left:0px;top:959px;width:668px;height:42px;background:#fff;border:1px solid #a8a8a8;border-left:none;"></div>
<div class="t" style="left:4px;top:965px;font-size:12px;color:#000;height:14px;"><i>命</i><i>令</i><i>：</i>PLATEDE [PLATEDE] <i>板</i><i>配</i><i>筋</i><i>设</i><i>计</i> [<i>双</i><i>击</i><i>此</i><i>行</i><i>进</i><i>行</i><i>快</i><i>捷</i><i>键</i><i>设</i><i>置</i>]</div>
<div class="t" style="left:4px;top:984px;font-size:12px;color:#000;height:14px;"><i>楼</i><i>板</i><i>配</i><i>筋</i><i>设</i><i>计</i><i>完</i><i>成</i>!</div>
<div class="r" style="left:650px;top:962px;width:15px;height:16px;background:#fff;border:1px solid #8a8a8a;"></div>
<div class="r" style="left:650px;top:983px;width:15px;height:16px;background:#fff;border:1px solid #8a8a8a;"></div>
<svg class="r" style="left:654px;top:967px;" width="8" height="6"><path d="M0 5h7l-3.5-4z" fill="#000"/></svg>
<svg class="r" style="left:654px;top:988px;" width="8" height="6"><path d="M0 1h7l-3.5 4z" fill="#000"/></svg>
<div class="r" style="left:668px;top:959px;width:1250px;height:43px;background:#f0f0f0;"></div>
<div class="r" style="left:703px;top:968px;width:192px;height:25px;background:linear-gradient(#f2f2f2,#e2e2e2);border:1px solid #acacac;"></div>
<div class="r" style="left:709px;top:974px;width:11px;height:10px;background:#bdbdbd;"></div>
<div class="t" style="left:725px;top:973px;font-size:12px;color:#4a78b8;height:15px;">S-ANNO-CRSR</div>
<svg class="r" style="left:881px;top:977px;" width="8" height="6"><path d="M1 1l3 3 3-3" stroke="#444" stroke-width="1.2" fill="none"/></svg>
<div class="r" style="left:900px;top:968px;width:90px;height:25px;background:linear-gradient(#f2f2f2,#e2e2e2);border:1px solid #acacac;"></div>
<div class="r" style="left:906px;top:974px;width:11px;height:10px;background:#bdbdbd;"></div>
<div class="t" style="left:922px;top:973px;font-size:12px;color:#4a78b8;height:15px;">ByLayer</div>
<svg class="r" style="left:976px;top:977px;" width="8" height="6"><path d="M1 1l3 3 3-3" stroke="#444" stroke-width="1.2" fill="none"/></svg>
<div class="r" style="left:995px;top:968px;width:155px;height:25px;background:linear-gradient(#f2f2f2,#e2e2e2);border:1px solid #acacac;"></div>
<div class="r" style="left:1001px;top:979px;width:67px;height:1px;background:#333;"></div>
<div class="t" style="left:1073px;top:973px;font-size:12px;color:#4a78b8;height:15px;">ByLayer</div>
<svg class="r" style="left:1136px;top:977px;" width="8" height="6"><path d="M1 1l3 3 3-3" stroke="#444" stroke-width="1.2" fill="none"/></svg>
<div class="r" style="left:1155px;top:968px;width:120px;height:25px;background:linear-gradient(#f2f2f2,#e2e2e2);border:1px solid #acacac;"></div>
<div class="r" style="left:1161px;top:979px;width:42px;height:1px;background:#333;"></div>
<div class="t" style="left:1208px;top:973px;font-size:12px;color:#4a78b8;height:15px;">ByLayer</div>
<svg class="r" style="left:1261px;top:977px;" width="8" height="6"><path d="M1 1l3 3 3-3" stroke="#444" stroke-width="1.2" fill="none"/></svg>
<div class="r" style="left:1310px;top:968px;width:78px;height:25px;background:linear-gradient(#f2f2f2,#e2e2e2);border:1px solid #acacac;"></div>
<div class="t" style="left:1316px;top:973px;font-size:12px;color:#4a78b8;height:15px;">3<i>号</i><i>字</i></div>
<svg class="r" style="left:1374px;top:977px;" width="8" height="6"><path d="M1 1l3 3 3-3" stroke="#444" stroke-width="1.2" fill="none"/></svg>
<div class="r" style="left:1423px;top:968px;width:105px;height:25px;background:linear-gradient(#f2f2f2,#e2e2e2);border:1px solid #acacac;"></div>
<div class="t" style="left:1429px;top:973px;font-size:12px;color:#4a78b8;height:15px;">DIM_100_100</div>
<svg class="r" style="left:1514px;top:977px;" width="8" height="6"><path d="M1 1l3 3 3-3" stroke="#444" stroke-width="1.2" fill="none"/></svg>
<div class="t" style="left:4px;top:1013px;font-size:12px;color:#000;height:14px;"><i>命</i><i>令</i>:</div>
<div class="r" style="left:39px;top:1004px;width:1px;height:26px;background:#a0a0a0;"></div>
<div class="r" style="left:0px;top:1031px;width:1918px;height:2px;background:#d5dde6;"></div>
<div class="t" style="left:1565px;top:1009px;font-size:14px;color:#000;width:58px;height:18px;letter-spacing:-0.4px;">EasyBIM</div>
<div class="t" style="left:1620px;top:1009px;font-size:14.7px;color:#000;width:90px;height:18px;"><i>技</i><i>术</i><i>服</i><i>务</i><i>群</i><i>：</i></div>
<div class="t" style="left:1705px;top:1009px;font-size:14.5px;color:#000;width:80px;height:18px;">787823095</div>
<div class="t" style="left:1787px;top:1009px;font-size:14.7px;color:#000;width:75px;height:18px;"><i>当</i><i>前</i><i>版</i><i>本</i><i>：</i></div>
<div class="t" style="left:1857px;top:1009px;font-size:14.5px;color:#000;width:56px;height:18px;">V2-1.52</div>
<svg class="r" style="left:0;top:0" width="1340" height="90"><path d="M23.0 58.5Q20.0 55.0 16.0 55.0Q11.5 55.0 10.5 58.5V77.5Q14.5 75.0 18.0 76.0Q21.5 77.0 23.0 79.0Q24.5 77.0 28.0 76.0Q31.5 75.0 35.5 77.5V58.5Q34.5 55.0 30.0 55.0Q26.0 55.0 23.0 58.5V78.5" fill="none" stroke="#2e9fd8" stroke-width="1.6" stroke-linejoin="round"/><path d="M13.0 62.0h7.5M25.5 62.0h7.5" stroke="#f6a728" stroke-width="1.1"/><path d="M13.0 66.6h7.5M25.5 66.6h7.5" stroke="#f6a728" stroke-width="1.1"/><path d="M13.0 71.2h7.5M25.5 71.2h7.5" stroke="#f6a728" stroke-width="1.1"/><rect x="48.8" y="66.3" width="24.4" height="2.6" fill="#c5d8e2"/><rect x="49.0" y="55.6" width="24" height="24.4" rx="2" fill="none" stroke="#1e1e1e" stroke-width="1.7"/><path d="M61.0 55.5V80.3" stroke="#ff0000" stroke-width="1.7"/><path d="M61.0 56.2h2M61.0 79.6h2" stroke="#ff0000" stroke-width="1.2"/><rect x="92.7" y="56.0" width="10.3" height="10" rx="2.2" fill="#2b93c4"/><rect x="92.7" y="70.0" width="10.3" height="10" rx="2.2" fill="#2b93c4"/><rect x="106.9" y="70.0" width="10.3" height="10" rx="2.2" fill="#2b93c4"/><path d="M108.6 56.6q2.2 -1.6 3.4 0.7q2.5 -2.0 4.3 0.7q2.2 2.9 0.5 5.4q-0.5 3.1 -3.4 2.9q-2.7 1.3 -4.5 -1.1q-2.5 -2.5 -1.3 -4.7q-0.9 -3.1 1.1 -3.8z" fill="#6ab04c" stroke="#2a2a2a" stroke-width="1.4"/><defs><linearGradient id="sg" x1="0" y1="0" x2="1" y2="0"><stop offset="0" stop-color="#3db3e6"/><stop offset="1" stop-color="#1590cc"/></linearGradient></defs><path d="M148.0 56.8H169.5L164.0 68.6H142.7z" fill="url(#sg)"/><path d="M142.7 69.4H164.0V73.8H142.7z" fill="#1d96d2"/><path d="M164.8 68.8L170.0 57.8V62.5L164.8 73.5z" fill="#5cc0ea"/><path d="M149.4 79.8H170.0V66.2z M159.0 76.8H167.0V71.3z" fill="#7db32a" fill-rule="evenodd"/><rect x="198.8" y="55.2" width="20.4" height="19.4" fill="none" stroke="#111" stroke-width="1.7"/><path d="M202.5 62h13M202.5 68.4h13" stroke="#111" stroke-width="1.7"/><rect x="195.0" y="75.6" width="27.6" height="2.5" rx="1.2" fill="#8ab833"/><path d="M265.1 55.6H252.8Q250.8 55.6 250.8 57.6V78.0Q250.8 80.0 252.8 80.0H265.1" fill="none" stroke="#1e1e1e" stroke-width="1.7"/><path d="M269.1 55.6H272.8Q274.8 55.6 274.8 57.6V78.0Q274.8 80.0 272.8 80.0H269.1" fill="none" stroke="#1e1e1e" stroke-width="1.7"/><path d="M266.6 55.1V65.6M266.6 70.0V80.5" stroke="#ff0000" stroke-width="1.6" fill="none"/><path d="M266.6 55.9h2.2M266.6 79.7h2.2" stroke="#ff0000" stroke-width="1.3" fill="none"/><path d="M261.9 64.6A4.6 4.6 0 1 0 263.1 69.6" fill="none" stroke="#2e9fd8" stroke-width="2"/><path d="M259.9 65.8l5-0.4l-0.8-4.6z" fill="#2e9fd8"/><path d="M318.5 55.6H306.8Q304.8 55.6 304.8 57.6V78.0Q304.8 80.0 306.8 80.0H318.5" fill="none" stroke="#1e1e1e" stroke-width="1.7"/><path d="M322.5 55.6H326.8Q328.8 55.6 328.8 57.6V78.0Q328.8 80.0 326.8 80.0H322.5" fill="none" stroke="#1e1e1e" stroke-width="1.7"/><path d="M320.0 55.1V80.5" stroke="#ff0000" stroke-width="1.6" fill="none"/><path d="M320.0 55.9h2.2M320.0 79.7h2.2" stroke="#ff0000" stroke-width="1.3" fill="none"/><text transform="translate(315.5 73.3) rotate(-90)" font-size="9" font-weight="bold" fill="#222" font-family="Liberation Sans,sans-serif" textLength="11" lengthAdjust="spacingAndGlyphs">AA</text><rect x="348.7" y="55.6" width="24" height="24.4" rx="2" fill="none" stroke="#1e1e1e" stroke-width="1.7"/><text x="352.1" y="72.0" font-size="10.5" font-weight="bold" fill="#7db32a" font-family="Liberation Sans,sans-serif">A</text><text x="361.2" y="77.0" font-size="10.5" font-weight="bold" fill="#222" font-family="Liberation Sans,sans-serif">A</text><path d="M359.2 60.6h-6" stroke="#7db32a" stroke-width="1.1"/><path d="M351.2 60.6l2.6-1.7v3.4z" fill="#7db32a"/><path d="M362.2 64.6h6" stroke="#222" stroke-width="1.1"/><path d="M370.2 64.6l-2.6-1.7v3.4z" fill="#222"/><rect x="382.7" y="55.6" width="24" height="24.4" rx="2" fill="none" stroke="#1e1e1e" stroke-width="1.7"/><text x="386.1" y="72.0" font-size="10.5" font-weight="bold" fill="#7db32a" font-family="Liberation Sans,sans-serif">A</text><text x="395.2" y="77.0" font-size="10.5" font-weight="bold" fill="#222" font-family="Liberation Sans,sans-serif">A</text><path d="M393.2 60.6h-6" stroke="#7db32a" stroke-width="1.1"/><path d="M385.2 60.6l2.6-1.7v3.4z" fill="#7db32a"/><path d="M396.2 64.6h6" stroke="#222" stroke-width="1.1"/><path d="M404.2 64.6l-2.6-1.7v3.4z" fill="#222"/><text x="432.8" y="71.8" font-size="19" font-weight="bold" fill="#000" font-family="Liberation Sans,sans-serif" textLength="12.5" lengthAdjust="spacingAndGlyphs">A</text><path d="M428.0 76.5h17" stroke="#7db32a" stroke-width="2.4"/><path d="M449.5 76.5l-6-4.6v9.2z" fill="#7db32a"/><path d="M484.7 55.6H472.7Q470.7 55.6 470.7 57.6V78.0Q470.7 80.0 472.7 80.0H484.7" fill="none" stroke="#1e1e1e" stroke-width="1.7"/><path d="M488.7 55.6H492.7Q494.7 55.6 494.7 57.6V78.0Q494.7 80.0 492.7 80.0H488.7" fill="none" stroke="#1e1e1e" stroke-width="1.7"/><path d="M486.2 55.1V80.5" stroke="#ff0000" stroke-width="1.6" fill="none"/><path d="M486.2 55.9h2.2M486.2 79.7h2.2" stroke="#ff0000" stroke-width="1.3" fill="none"/><path d="M475.1 67.9h7.2M478.7 64.3v7.2" stroke="#2e9fd8" stroke-width="1.8"/><path d="M484.9 67.9l-3.0-2.8v5.6z" fill="#2e9fd8"/><path d="M472.5 67.9l3.0-2.8v5.6z" fill="#2e9fd8"/><path d="M478.7 74.1l-2.8 -3.0h5.6z" fill="#2e9fd8"/><path d="M478.7 61.7l-2.8 3.0h5.6z" fill="#2e9fd8"/><path d="M519.4 55.6H506.8Q504.8 55.6 504.8 57.6V78.0Q504.8 80.0 506.8 80.0H519.4" fill="none" stroke="#1e1e1e" stroke-width="1.7"/><path d="M523.4 55.6H526.8Q528.8 55.6 528.8 57.6V78.0Q528.8 80.0 526.8 80.0H523.4" fill="none" stroke="#1e1e1e" stroke-width="1.7"/><path d="M520.9 55.1V80.5" stroke="#ff0000" stroke-width="1.6" fill="none"/><path d="M520.9 55.9h2.2M520.9 79.7h2.2" stroke="#ff0000" stroke-width="1.3" fill="none"/><path d="M511.5 63.5V72.5H506.2L509.2 64.5z M513.9 63.5V72.5H519.2L516.2 64.5z" fill="#1d96d2"/><path d="M512.7 62V73" stroke="#a4c639" stroke-width="1"/><rect x="542.8" y="55.6" width="24" height="24.4" rx="2" fill="none" stroke="#1e1e1e" stroke-width="1.7"/><path d="M543.7 76.2L556.9 58.2" stroke="#ff0000" stroke-width="1.6"/><path d="M543.7 76.2L565.6 65.8" stroke="#ff0000" stroke-width="1.6"/><path d="M543.7 79.2L565.6 75.0" stroke="#ff0000" stroke-width="1.6"/><path d="M543.7 71V79" stroke="#ff0000" stroke-width="1.4"/><rect x="584.6" y="55.6" width="24" height="24.4" rx="2" fill="none" stroke="#1e1e1e" stroke-width="1.7"/><path d="M584.0 64.5h25.2M584.0 70.7h25.2" stroke="#ff0000" stroke-width="1.6"/><rect x="626.6" y="55.6" width="24" height="24.4" rx="2" fill="none" stroke="#1e1e1e" stroke-width="1.7"/><path d="M626.0 64.5h25.2M626.0 70.7h25.2" stroke="#ff0000" stroke-width="1.6"/><rect x="668.6" y="55.6" width="24" height="24.4" rx="2" fill="none" stroke="#1e1e1e" stroke-width="1.7"/><path d="M668.0 64.5h25.2M668.0 70.7h25.2" stroke="#ff0000" stroke-width="1.6"/><path d="M730.5 58.5Q727.5 55.0 723.5 55.0Q719.0 55.0 718.0 58.5V77.0Q722.0 74.5 725.5 75.5Q729.0 76.5 730.5 78.5Q732.0 76.5 735.5 75.5Q739.0 74.5 743.0 77.0V58.5Q742.0 55.0 737.5 55.0Q733.5 55.0 730.5 58.5V78.0" fill="none" stroke="#2e9fd8" stroke-width="1.6" stroke-linejoin="round"/><circle cx="740.0" cy="72" r="5.4" fill="#fff"/><path d="M740.2 67.4a4.2 4.4 0 0 1 4.2 4.4q0 2.2-1.8 4v2h-4.8v-2q-1.8-1.8-1.8-4a4.2 4.4 0 0 1 4.2-4.4z" fill="#f0a20c"/><rect x="738.3" y="78.4" width="3.8" height="1.2" fill="#f0a20c"/><rect x="738.9" y="80.1" width="2.6" height="1.1" fill="#f0a20c"/><path d="M772.8 58.5Q769.8 55.0 765.8 55.0Q761.3 55.0 760.3 58.5V77.0Q764.3 74.5 767.8 75.5Q771.3 76.5 772.8 78.5Q774.3 76.5 777.8 75.5Q781.3 74.5 785.3 77.0V58.5Q784.3 55.0 779.8 55.0Q775.8 55.0 772.8 58.5V78.0" fill="none" stroke="#2e9fd8" stroke-width="1.6" stroke-linejoin="round"/><circle cx="782.0" cy="72" r="5.4" fill="#fff"/><path d="M782.5 67.4a4.2 4.4 0 0 1 4.2 4.4q0 2.2-1.8 4v2h-4.8v-2q-1.8-1.8-1.8-4a4.2 4.4 0 0 1 4.2-4.4z" fill="#c6d6de"/><rect x="780.6" y="78.4" width="3.8" height="1.2" fill="#c6d6de"/><rect x="781.2" y="80.1" width="2.6" height="1.1" fill="#c6d6de"/><path d="M815.0 58.5Q812.0 55.0 808.0 55.0Q803.5 55.0 802.5 58.5V77.0Q806.5 74.5 810.0 75.5Q813.5 76.5 815.0 78.5Q816.5 76.5 820.0 75.5Q823.5 74.5 827.5 77.0V58.5Q826.5 55.0 822.0 55.0Q818.0 55.0 815.0 58.5V78.0" fill="none" stroke="#2e9fd8" stroke-width="1.6" stroke-linejoin="round"/><circle cx="820.6" cy="70.6" r="4" fill="#fff" stroke="#f0a20c" stroke-width="1.4"/><path d="M823.6 73.8l4 2.6" stroke="#f0a20c" stroke-width="1.5"/><circle cx="848.0" cy="59.0" r="3.1" fill="#0d97d7"/><circle cx="857.0" cy="59.0" r="3.1" fill="#0d97d7"/><circle cx="866.0" cy="59.0" r="3.1" fill="#0d97d7"/><circle cx="848.0" cy="67.8" r="3.1" fill="#0d97d7"/><circle cx="857.0" cy="67.8" r="3.1" fill="#0d97d7"/><circle cx="866.0" cy="67.8" r="3.1" fill="#0d97d7"/><circle cx="848.0" cy="76.6" r="3.1" fill="#0d97d7"/><circle cx="857.0" cy="76.6" r="3.1" fill="#0d97d7"/><path d="M866.0 67.7a4.2 4.4 0 0 1 4.2 4.4q0 2.2-1.8 4v2h-4.8v-2q-1.8-1.8-1.8-4a4.2 4.4 0 0 1 4.2-4.4z" fill="#f0a20c"/><rect x="864.1" y="78.7" width="3.8" height="1.2" fill="#f0a20c"/><rect x="864.7" y="80.4" width="2.6" height="1.1" fill="#f0a20c"/><circle cx="890.0" cy="59.0" r="3.1" fill="#0d97d7"/><circle cx="899.0" cy="59.0" r="3.1" fill="#0d97d7"/><circle cx="908.0" cy="59.0" r="3.1" fill="#0d97d7"/><circle cx="890.0" cy="67.8" r="3.1" fill="#0d97d7"/><circle cx="899.0" cy="67.8" r="3.1" fill="#0d97d7"/><circle cx="908.0" cy="67.8" r="3.1" fill="#0d97d7"/><circle cx="890.0" cy="76.6" r="3.1" fill="#0d97d7"/><circle cx="899.0" cy="76.6" r="3.1" fill="#0d97d7"/><path d="M908.0 67.7a4.2 4.4 0 0 1 4.2 4.4q0 2.2-1.8 4v2h-4.8v-2q-1.8-1.8-1.8-4a4.2 4.4 0 0 1 4.2-4.4z" fill="#c6d6de"/><rect x="906.1" y="78.7" width="3.8" height="1.2" fill="#c6d6de"/><rect x="906.7" y="80.4" width="2.6" height="1.1" fill="#c6d6de"/><rect x="936.2" y="56.0" width="10.7" height="10" rx="2.2" fill="#2b93c4"/><rect x="936.2" y="70.0" width="10.7" height="10" rx="2.2" fill="#2b93c4"/><rect x="950.6" y="70.0" width="10.7" height="10" rx="2.2" fill="#2b93c4"/><rect x="950.8" y="55.8" width="10.4" height="9.6" rx="1.5" fill="#fff" stroke="#8c8c8c" stroke-width="1.1"/><path d="M950.8 60.5h10.4" stroke="#9a9a9a" stroke-width="1"/><path d="M956.4 55.5v10.2" stroke="#ff0000" stroke-width="1.2"/><path d="M989.1 55.6H976.7Q974.7 55.6 974.7 57.6V78.0Q974.7 80.0 976.7 80.0H989.1" fill="none" stroke="#1e1e1e" stroke-width="1.7"/><path d="M993.1 55.6H996.7Q998.7 55.6 998.7 57.6V78.0Q998.7 80.0 996.7 80.0H993.1" fill="none" stroke="#1e1e1e" stroke-width="1.7"/><path d="M990.6 55.1V65.6M990.6 70.0V80.5" stroke="#ff0000" stroke-width="1.6" fill="none"/><path d="M990.6 55.9h2.2M990.6 79.7h2.2" stroke="#ff0000" stroke-width="1.3" fill="none"/><path d="M985.0 58.5V62.8" stroke="#f0a20c" stroke-width="1.8"/><path d="M982.4 62.8H987.6L985.0 66.0z" fill="#f0a20c"/><path d="M985.0 77.0V72.7" stroke="#f0a20c" stroke-width="1.8"/><path d="M982.4 72.7H987.6L985.0 69.5z" fill="#f0a20c"/><path d="M1023.2 55.6H1010.7Q1008.7 55.6 1008.7 57.6V78.0Q1008.7 80.0 1010.7 80.0H1023.2" fill="none" stroke="#1e1e1e" stroke-width="1.7"/><path d="M1027.2 55.6H1030.7Q1032.7 55.6 1032.7 57.6V78.0Q1032.7 80.0 1030.7 80.0H1027.2" fill="none" stroke="#1e1e1e" stroke-width="1.7"/><path d="M1024.7 55.1V80.5" stroke="#ff0000" stroke-width="1.6" fill="none"/><path d="M1024.7 55.9h2.2M1024.7 79.7h2.2" stroke="#ff0000" stroke-width="1.3" fill="none"/><path d="M1019.0 66.0V61.7" stroke="#f0a20c" stroke-width="1.8"/><path d="M1016.4 61.7H1021.6L1019.0 58.5z" fill="#f0a20c"/><path d="M1019.0 69.5V73.8" stroke="#f0a20c" stroke-width="1.8"/><path d="M1016.4 73.8H1021.6L1019.0 77.0z" fill="#f0a20c"/><rect x="1042.5" y="55.6" width="24" height="24.4" rx="2" fill="none" stroke="#1e1e1e" stroke-width="1.7"/><path d="M1040.0 66.3h12v2.2M1069.5 66.3h-12v2.2" stroke="#ff0000" stroke-width="1.5" fill="none"/><rect x="1076.6" y="55.6" width="24" height="24.4" rx="2" fill="none" stroke="#1e1e1e" stroke-width="1.7"/><path d="M1081.5 73.8h15.5" stroke="#7db32a" stroke-width="1.7"/><path d="M1082.5 71.6l1-3.6l7.8-6l2.7 3.4l-7.8 6z" fill="#7db32a"/><path d="M1092.4 61.2l1.6-1.2q1.2-0.6 2.2 0.6q0.9 1.3-0.1 2.3l-1.6 1.2z" fill="#7db32a"/><path d="M1125.1 55.6H1112.7Q1110.7 55.6 1110.7 57.6V78.0Q1110.7 80.0 1112.7 80.0H1125.1" fill="none" stroke="#1e1e1e" stroke-width="1.7"/><path d="M1129.1 55.6H1132.7Q1134.7 55.6 1134.7 57.6V78.0Q1134.7 80.0 1132.7 80.0H1129.1" fill="none" stroke="#1e1e1e" stroke-width="1.7"/><path d="M1126.6 55.1V80.5" stroke="#ff0000" stroke-width="1.6" fill="none"/><path d="M1126.6 55.9h2.2M1126.6 79.7h2.2" stroke="#ff0000" stroke-width="1.3" fill="none"/><circle cx="1118.0" cy="67.6" r="6" fill="#fff" stroke="#7db32a" stroke-width="1"/><circle cx="1118.0" cy="65.6" r="2.6" fill="#7db32a"/><path d="M1113.8 72.0q0.3-3.4 4.2-3.4t4.2 3.4q-4.2 2.2-8.4 0z" fill="#7db32a"/><rect x="1144.7" y="55.6" width="24" height="24.4" rx="2" fill="none" stroke="#1e1e1e" stroke-width="1.7"/><g transform="translate(1157.5 67.5) rotate(40)"><rect x="-2" y="-12.5" width="4" height="7" fill="#333"/><rect x="-6" y="-5.8" width="12" height="4.2" fill="#333"/><path d="M-6 -1h12l1 8.5q-7 3-14 0z" fill="#f7a85e"/></g><rect x="1178.6" y="55.6" width="24" height="24.4" rx="2" fill="none" stroke="#1e1e1e" stroke-width="1.7"/><path d="M1185.4 62.4A7.6 7.6 0 0 1 1198.2 68.6" fill="none" stroke="#2e9fd8" stroke-width="1.9"/><path d="M1198.4 71.4l-3.4-4h6.2z" fill="#2e9fd8"/><path d="M1195.8 73.6A7.6 7.6 0 0 1 1183.0 67.4" fill="none" stroke="#5cb85c" stroke-width="1.9"/><path d="M1182.8 64.6l3.4 4h-6.2z" fill="#5cb85c"/><circle cx="1232.7" cy="61.8" r="5.8" fill="#ff0000"/><path d="M1230.1 66.5h5.2l1 4.5h3.5q3.5 0 3.5 3v1.8h-21.4v-1.8q0-3 3.5-3h3.5z" fill="#ff0000"/><rect x="1222.0" y="77.0" width="21.4" height="2.6" fill="#ff0000"/><circle cx="1263.4" cy="61.8" r="5.8" fill="#7db32a"/><path d="M1260.8 66.5h5.2l1 4.5h3.5q3.5 0 3.5 3v1.8h-21.4v-1.8q0-3 3.5-3h3.5z" fill="#7db32a"/><rect x="1252.7" y="77.0" width="21.4" height="2.6" fill="#7db32a"/><path d="M1280.8 69.1L1280.8 70.9L1278.6 71.7L1278.1 73.0L1279.0 75.1L1277.7 76.4L1275.6 75.5L1274.3 76.0L1273.5 78.2L1271.7 78.2L1270.9 76.0L1269.6 75.5L1267.5 76.4L1266.2 75.1L1267.1 73.0L1266.6 71.7L1264.4 70.9L1264.4 69.1L1266.6 68.3L1267.1 67.0L1266.2 64.9L1267.5 63.6L1269.6 64.5L1270.9 64.0L1271.7 61.8L1273.5 61.8L1274.3 64.0L1275.6 64.5L1277.7 63.6L1279.0 64.9L1278.1 67.0L1278.6 68.3z" fill="#f3a91f" stroke="#f3a91f" stroke-width="0.8" stroke-linejoin="round"/><circle cx="1272.6" cy="70.0" r="3.1" fill="#fff"/><circle cx="1272.6" cy="70" r="2" fill="none" stroke="#f6c66a" stroke-width="1"/><path d="M1294.7 57.9q4.7 -3.3 7.0 1.4q5.1 -4.2 8.8 1.4q4.7 6.0 0.9 11.2q-0.9 6.5 -7.0 6.0q-5.6 2.8 -9.3 -2.3q-5.1 -5.1 -2.8 -9.8q-1.9 -6.5 2.3 -7.9z" fill="#6ab04c" stroke="#2a2a2a" stroke-width="1.1"/><path d="M1295.5 70.5l10.5 10M1306.0 70.5l-10.5 10" stroke="#e63b1f" stroke-width="2.2"/></svg>
<svg class="r" style="left:0;top:0" width="1010" height="960"><g transform="translate(450.6 941.3)"><path d="M-7.7 -1.8L-1.2 -7.4V-3.9Q7.2 -3.4 7.7 6.4Q4.4 0.6 -1.2 0.6V4z" fill="#1e96dc"/></g><g transform="translate(480.2 941.3) scale(-1 1)"><path d="M-7.7 -1.8L-1.2 -7.4V-3.9Q7.2 -3.4 7.7 6.4Q4.4 0.6 -1.2 0.6V4z" fill="#1e96dc"/></g><path d="M501.6 941.9Q510.2 932.9 518.8 941.9Q510.2 950.9 501.6 941.9z" fill="#1e96dc"/><circle cx="510.2" cy="941.9" r="3.4" fill="#fff"/><circle cx="510.2" cy="941.9" r="1.6" fill="#1e96dc"/><path d="M516.8 933.1L503.6 950.3" stroke="#fff" stroke-width="3.2"/><path d="M516.8 933.1L503.6 950.3" stroke="#1e96dc" stroke-width="1.1"/><circle cx="534.4" cy="935.8" r="1.9" fill="#1e96dc"/><circle cx="540.3" cy="935.8" r="1.9" fill="#1e96dc"/><circle cx="546.2" cy="935.8" r="1.9" fill="#1e96dc"/><circle cx="534.4" cy="941.5" r="1.9" fill="#1e96dc"/><circle cx="540.3" cy="941.5" r="1.9" fill="#1e96dc"/><circle cx="546.2" cy="941.5" r="1.9" fill="#1e96dc"/><circle cx="534.4" cy="947.2" r="1.9" fill="#1e96dc"/><circle cx="540.3" cy="947.2" r="1.9" fill="#1e96dc"/><circle cx="546.2" cy="947.2" r="1.9" fill="#1e96dc"/><path d="M561.6 941.9Q570.2 932.9 578.8 941.9Q570.2 950.9 561.6 941.9z" fill="#1e96dc"/><circle cx="570.2" cy="941.9" r="3.4" fill="#fff"/><circle cx="570.2" cy="941.9" r="1.6" fill="#1e96dc"/><g transform="translate(600.0 941.3) scale(1.0)"><path d="M-3.4 -1V-3.6A3.4 3.4 0 0 1 3.4 -3.6V-1" fill="none" stroke="#1e96dc" stroke-width="1.8"/><rect x="-6" y="-1" width="12" height="8" rx="0.8" fill="#1e96dc"/></g><path d="M637.4 939.8A7.8 7.8 0 1 0 636.4 945.5" fill="none" stroke="#1e96dc" stroke-width="1"/><path d="M637.8 943.9l-2.8-3h4.8z" fill="#1e96dc"/><g transform="translate(629.5 941.3) scale(0.72)"><path d="M-3.4 -1V-3.6A3.4 3.4 0 0 1 3.4 -3.6V-1" fill="none" stroke="#333" stroke-width="1.8"/><rect x="-6" y="-1" width="12" height="8" rx="0.8" fill="#333"/></g><path d="M667.4 939.8A7.8 7.8 0 1 0 666.4 945.5" fill="none" stroke="#1e96dc" stroke-width="1"/><path d="M667.8 943.9l-2.8-3h4.8z" fill="#1e96dc"/><g transform="translate(659.5 941.3) scale(0.72)"><path d="M-3.4 -1V-3.6A3.4 3.4 0 0 1 3.4 -3.6V-2.6" fill="none" stroke="#1e96dc" stroke-width="1.8"/><rect x="-6" y="-1" width="12" height="8" rx="0.8" fill="#1e96dc"/></g><path d="M684.5 936.4H699.2L695.0 944.4H680.6z" fill="#4aaeea"/><path d="M680.6 944.9H695.0V947.6H680.6z" fill="#2a8fd0"/><path d="M695.5 944.6L699.4 937V939.8L695.5 947.4z" fill="#7cc6f0"/><path d="M681.2 947.4L696.0 936.6h3L684.6 947.4z" fill="#333"/><path d="M713.1 936.6L724.4 935L727.8 936.2V946.2L724.4 948.4L713.1 946.8z" fill="#3ba3e8"/><path d="M724.4 936.4L727.8 936.2V946.2L724.4 948.4z" fill="#6bbcf0"/><path d="M717.8 942.6l2.6 3.2l6.4-7.4" fill="none" stroke="#e8401c" stroke-width="1.7"/><path d="M746.2 946.0L754.2 938.0" stroke="#1e96dc" stroke-width="2"/><path d="M756.4 936.0h-5.6l5.6 5.6z M744.0 948.2h5.6l-5.6-5.6z" fill="#1e96dc"/><path d="M771.7 935.8h17.6M771.7 947.1h17.6M775.5 933.5v16.4M785.7 933.5v16.4" stroke="#222" stroke-width="1.3"/><circle cx="775.5" cy="935.8" r="1.7" fill="#1e96dc"/><circle cx="775.5" cy="947.1" r="1.7" fill="#1e96dc"/><circle cx="785.7" cy="935.8" r="1.7" fill="#1e96dc"/><circle cx="785.7" cy="947.1" r="1.7" fill="#1e96dc"/><rect x="808.5" y="934.4" width="9.6" height="5" rx="2.5" fill="none" stroke="#6aa842" stroke-width="1.7"/><rect x="802.2" y="937.2" width="9.6" height="5" rx="2.5" fill="none" stroke="#3a8fcc" stroke-width="1.7"/><rect x="802.4" y="943.3" width="15.6" height="5.8" fill="#fff" stroke="#5ab0e6" stroke-width="1"/><text x="810.2" y="947.5" font-size="6" font-weight="bold" fill="#111" text-anchor="middle" font-family="Liberation Sans,sans-serif" textLength="12.6" lengthAdjust="spacingAndGlyphs">DWG</text><g transform="translate(836.5 941.6) rotate(20)"><rect x="-3.1" y="-7.6" width="6.2" height="9" rx="3.1" fill="none" stroke="#1a3c5a" stroke-width="3.4"/><rect x="-3.1" y="-7.6" width="6.2" height="9" rx="3.1" fill="none" stroke="#1ea0e6" stroke-width="1.8"/><rect x="-3.1" y="-1.2" width="6.2" height="9" rx="3.1" fill="none" stroke="#1a3c5a" stroke-width="3.4"/><rect x="-3.1" y="-1.2" width="6.2" height="9" rx="3.1" fill="none" stroke="#1ea0e6" stroke-width="1.8"/></g><path d="M841.0 941.8l2.6 2.8l5.4-6.6" fill="none" stroke="#e8401c" stroke-width="1.5"/><g transform="translate(866.5 941.6) rotate(20)"><rect x="-3.1" y="-7.6" width="6.2" height="9" rx="3.1" fill="none" stroke="#1a3c5a" stroke-width="3.4"/><rect x="-3.1" y="-7.6" width="6.2" height="9" rx="3.1" fill="none" stroke="#1ea0e6" stroke-width="1.8"/><rect x="-3.1" y="-1.2" width="6.2" height="9" rx="3.1" fill="none" stroke="#1a3c5a" stroke-width="3.4"/><rect x="-3.1" y="-1.2" width="6.2" height="9" rx="3.1" fill="none" stroke="#1ea0e6" stroke-width="1.8"/></g><path d="M871.5 941.6h6" stroke="#333" stroke-width="2.4"/><path d="M881.0 941.6l-3.8-3.2v6.4z" fill="#333"/><g transform="translate(896.5 941.6) rotate(20)"><rect x="-3.1" y="-7.6" width="6.2" height="9" rx="3.1" fill="none" stroke="#1a3c5a" stroke-width="3.4"/><rect x="-3.1" y="-7.6" width="6.2" height="9" rx="3.1" fill="none" stroke="#1ea0e6" stroke-width="1.8"/><rect x="-3.1" y="-1.2" width="6.2" height="9" rx="3.1" fill="none" stroke="#1a3c5a" stroke-width="3.4"/><rect x="-3.1" y="-1.2" width="6.2" height="9" rx="3.1" fill="none" stroke="#1ea0e6" stroke-width="1.8"/></g><path d="M902.0 941.9h8M906.0 937.7v8.4" stroke="#333" stroke-width="1.3"/><g transform="translate(926.5 941.6) rotate(20)"><rect x="-3.1" y="-7.6" width="6.2" height="9" rx="3.1" fill="none" stroke="#1a3c5a" stroke-width="3.4"/><rect x="-3.1" y="-7.6" width="6.2" height="9" rx="3.1" fill="none" stroke="#1ea0e6" stroke-width="1.8"/><rect x="-3.1" y="-1.2" width="6.2" height="9" rx="3.1" fill="none" stroke="#1a3c5a" stroke-width="3.4"/><rect x="-3.1" y="-1.2" width="6.2" height="9" rx="3.1" fill="none" stroke="#1ea0e6" stroke-width="1.8"/></g><path d="M938.6 939.5A3.4 3.6 0 1 0 938.6 943.9" fill="none" stroke="#333" stroke-width="1.4"/><path d="M939.6 937.7v3h-3z" fill="#333"/><g transform="translate(956.5 941.6) rotate(20)"><rect x="-3.1" y="-7.6" width="6.2" height="9" rx="3.1" fill="none" stroke="#1a3c5a" stroke-width="3.4"/><rect x="-3.1" y="-7.6" width="6.2" height="9" rx="3.1" fill="none" stroke="#1ea0e6" stroke-width="1.8"/><rect x="-3.1" y="-1.2" width="6.2" height="9" rx="3.1" fill="none" stroke="#1a3c5a" stroke-width="3.4"/><rect x="-3.1" y="-1.2" width="6.2" height="9" rx="3.1" fill="none" stroke="#1ea0e6" stroke-width="1.8"/></g><path d="M962.5 939.5h8.5M962.5 941.9h8.5M962.5 944.3h8.5" stroke="#333" stroke-width="1.2"/><path d="M982.4 937h10" stroke="#4aa8f0" stroke-width="3"/><path d="M998.4 937l-6.4-4.2v8.4z" fill="#4aa8f0"/><rect x="982.4" y="942.3" width="16.2" height="6.4" fill="#fff" stroke="#5ab0e6" stroke-width="1"/><text x="990.5" y="947.1" font-size="6.8" font-weight="bold" fill="#111" text-anchor="middle" font-family="Liberation Sans,sans-serif" textLength="13.2" lengthAdjust="spacingAndGlyphs">DWG</text></svg>
<svg class="r" style="left:0;top:0" width="1918" height="1033"><rect x="677.3" y="971.1" width="20.7" height="3.3" fill="#1e9bd7"/><rect x="677.3" y="986" width="20.7" height="3.3" fill="#1e9bd7"/><rect x="677.3" y="978.9" width="4.2" height="2.8" fill="#f0a30a"/><rect x="682.7" y="978.9" width="4.2" height="2.8" fill="#f0a30a"/><rect x="688.1" y="978.9" width="4.2" height="2.8" fill="#f0a30a"/><rect x="693.5" y="978.9" width="4.2" height="2.8" fill="#f0a30a"/><text x="1284.6" y="990" font-size="26" font-weight="bold" fill="#3c8acc" font-family="Liberation Serif,serif" textLength="19" lengthAdjust="spacingAndGlyphs">T</text><path d="M1305.8 978.2l-6.4 6.6l1.6 1.4z" fill="#f0a30a"/><circle cx="1298" cy="987" r="1.9" fill="#f0a30a"/><path d="M1415.5 975.4L1415.5 977.0L1413.6 977.7L1413.1 978.8L1413.9 980.7L1412.8 981.8L1410.9 981.0L1409.8 981.5L1409.1 983.4L1407.5 983.4L1406.8 981.5L1405.7 981.0L1403.8 981.8L1402.7 980.7L1403.5 978.8L1403.0 977.7L1401.1 977.0L1401.1 975.4L1403.0 974.7L1403.5 973.6L1402.7 971.7L1403.8 970.6L1405.7 971.4L1406.8 970.9L1407.5 969.0L1409.1 969.0L1409.8 970.9L1410.9 971.4L1412.8 970.6L1413.9 971.7L1413.1 973.6L1413.6 974.7z" fill="#f3a91f" stroke="#f3a91f" stroke-width="0.8" stroke-linejoin="round"/><circle cx="1408.3" cy="976.2" r="2.7" fill="#fff"/><circle cx="1408.3" cy="976.2" r="1.6" fill="none" stroke="#f8d088" stroke-width="0.8"/><path d="M1398.6 986.2h19.4" stroke="#1e9bd7" stroke-width="2.4"/><path d="M1399 982.4v7.6M1417.6 982.4v7.6" stroke="#1e9bd7" stroke-width="1.8"/><g transform="translate(1180.45 929.35) scale(0.75)"><path d="M484.7 55.6H472.7Q470.7 55.6 470.7 57.6V78.0Q470.7 80.0 472.7 80.0H484.7" fill="none" stroke="#1e1e1e" stroke-width="1.7"/><path d="M488.7 55.6H492.7Q494.7 55.6 494.7 57.6V78.0Q494.7 80.0 492.7 80.0H488.7" fill="none" stroke="#1e1e1e" stroke-width="1.7"/><path d="M486.2 55.1V80.5" stroke="#ff0000" stroke-width="1.6" fill="none"/><path d="M486.2 55.9h2.2M486.2 79.7h2.2" stroke="#ff0000" stroke-width="1.3" fill="none"/><path d="M475.1 67.9h7.2M478.7 64.3v7.2" stroke="#2e9fd8" stroke-width="1.8"/><path d="M484.9 67.9l-3.0-2.8v5.6z" fill="#2e9fd8"/><path d="M472.5 67.9l3.0-2.8v5.6z" fill="#2e9fd8"/><path d="M478.7 74.1l-2.8 -3.0h5.6z" fill="#2e9fd8"/><path d="M478.7 61.7l-2.8 3.0h5.6z" fill="#2e9fd8"/></g><g transform="translate(1185.15 929.35) scale(0.75)"><path d="M519.4 55.6H506.8Q504.8 55.6 504.8 57.6V78.0Q504.8 80.0 506.8 80.0H519.4" fill="none" stroke="#1e1e1e" stroke-width="1.7"/><path d="M523.4 55.6H526.8Q528.8 55.6 528.8 57.6V78.0Q528.8 80.0 526.8 80.0H523.4" fill="none" stroke="#1e1e1e" stroke-width="1.7"/><path d="M520.9 55.1V80.5" stroke="#ff0000" stroke-width="1.6" fill="none"/><path d="M520.9 55.9h2.2M520.9 79.7h2.2" stroke="#ff0000" stroke-width="1.3" fill="none"/><path d="M511.5 63.5V72.5H506.2L509.2 64.5z M513.9 63.5V72.5H519.2L516.2 64.5z" fill="#1d96d2"/><path d="M512.7 62V73" stroke="#a4c639" stroke-width="1"/></g><g transform="translate(862.65 929.35) scale(0.75)"><path d="M989.1 55.6H976.7Q974.7 55.6 974.7 57.6V78.0Q974.7 80.0 976.7 80.0H989.1" fill="none" stroke="#1e1e1e" stroke-width="1.7"/><path d="M993.1 55.6H996.7Q998.7 55.6 998.7 57.6V78.0Q998.7 80.0 996.7 80.0H993.1" fill="none" stroke="#1e1e1e" stroke-width="1.7"/><path d="M990.6 55.1V65.6M990.6 70.0V80.5" stroke="#ff0000" stroke-width="1.6" fill="none"/><path d="M990.6 55.9h2.2M990.6 79.7h2.2" stroke="#ff0000" stroke-width="1.3" fill="none"/><path d="M985.0 58.5V62.8" stroke="#f0a20c" stroke-width="1.8"/><path d="M982.4 62.8H987.6L985.0 66.0z" fill="#f0a20c"/><path d="M985.0 77.0V72.7" stroke="#f0a20c" stroke-width="1.8"/><path d="M982.4 72.7H987.6L985.0 69.5z" fill="#f0a20c"/></g><g transform="translate(867.05 929.35) scale(0.75)"><path d="M1023.2 55.6H1010.7Q1008.7 55.6 1008.7 57.6V78.0Q1008.7 80.0 1010.7 80.0H1023.2" fill="none" stroke="#1e1e1e" stroke-width="1.7"/><path d="M1027.2 55.6H1030.7Q1032.7 55.6 1032.7 57.6V78.0Q1032.7 80.0 1030.7 80.0H1027.2" fill="none" stroke="#1e1e1e" stroke-width="1.7"/><path d="M1024.7 55.1V80.5" stroke="#ff0000" stroke-width="1.6" fill="none"/><path d="M1024.7 55.9h2.2M1024.7 79.7h2.2" stroke="#ff0000" stroke-width="1.3" fill="none"/><path d="M1019.0 66.0V61.7" stroke="#f0a20c" stroke-width="1.8"/><path d="M1016.4 61.7H1021.6L1019.0 58.5z" fill="#f0a20c"/><path d="M1019.0 69.5V73.8" stroke="#f0a20c" stroke-width="1.8"/><path d="M1016.4 73.8H1021.6L1019.0 77.0z" fill="#f0a20c"/></g><g transform="translate(1247.50 929.35) scale(0.75)"><rect x="542.8" y="55.6" width="24" height="24.4" rx="2" fill="none" stroke="#1e1e1e" stroke-width="1.7"/><path d="M543.7 76.2L556.9 58.2" stroke="#ff0000" stroke-width="1.6"/><path d="M543.7 76.2L565.6 65.8" stroke="#ff0000" stroke-width="1.6"/><path d="M543.7 79.2L565.6 75.0" stroke="#ff0000" stroke-width="1.6"/><path d="M543.7 71V79" stroke="#ff0000" stroke-width="1.4"/></g><g transform="translate(876.25 929.35) scale(0.75)"><rect x="1076.6" y="55.6" width="24" height="24.4" rx="2" fill="none" stroke="#1e1e1e" stroke-width="1.7"/><path d="M1081.5 73.8h15.5" stroke="#7db32a" stroke-width="1.7"/><path d="M1082.5 71.6l1-3.6l7.8-6l2.7 3.4l-7.8 6z" fill="#7db32a"/><path d="M1092.4 61.2l1.6-1.2q1.2-0.6 2.2 0.6q0.9 1.3-0.1 2.3l-1.6 1.2z" fill="#7db32a"/></g><g transform="translate(880.65 929.35) scale(0.75)"><path d="M1125.1 55.6H1112.7Q1110.7 55.6 1110.7 57.6V78.0Q1110.7 80.0 1112.7 80.0H1125.1" fill="none" stroke="#1e1e1e" stroke-width="1.7"/><path d="M1129.1 55.6H1132.7Q1134.7 55.6 1134.7 57.6V78.0Q1134.7 80.0 1132.7 80.0H1129.1" fill="none" stroke="#1e1e1e" stroke-width="1.7"/><path d="M1126.6 55.1V80.5" stroke="#ff0000" stroke-width="1.6" fill="none"/><path d="M1126.6 55.9h2.2M1126.6 79.7h2.2" stroke="#ff0000" stroke-width="1.3" fill="none"/><circle cx="1118.0" cy="67.6" r="6" fill="#fff" stroke="#7db32a" stroke-width="1"/><circle cx="1118.0" cy="65.6" r="2.6" fill="#7db32a"/><path d="M1113.8 72.0q0.3-3.4 4.2-3.4t4.2 3.4q-4.2 2.2-8.4 0z" fill="#7db32a"/></g><g transform="translate(1234.95 929.35) scale(0.75)"><path d="M730.5 58.5Q727.5 55.0 723.5 55.0Q719.0 55.0 718.0 58.5V77.0Q722.0 74.5 725.5 75.5Q729.0 76.5 730.5 78.5Q732.0 76.5 735.5 75.5Q739.0 74.5 743.0 77.0V58.5Q742.0 55.0 737.5 55.0Q733.5 55.0 730.5 58.5V78.0" fill="none" stroke="#2e9fd8" stroke-width="1.6" stroke-linejoin="round"/><circle cx="740.0" cy="72" r="5.4" fill="#fff"/><path d="M740.2 67.4a4.2 4.4 0 0 1 4.2 4.4q0 2.2-1.8 4v2h-4.8v-2q-1.8-1.8-1.8-4a4.2 4.4 0 0 1 4.2-4.4z" fill="#f0a20c"/><rect x="738.3" y="78.4" width="3.8" height="1.2" fill="#f0a20c"/><rect x="738.9" y="80.1" width="2.6" height="1.1" fill="#f0a20c"/></g><g transform="translate(1233.85 929.35) scale(0.75)"><path d="M772.8 58.5Q769.8 55.0 765.8 55.0Q761.3 55.0 760.3 58.5V77.0Q764.3 74.5 767.8 75.5Q771.3 76.5 772.8 78.5Q774.3 76.5 777.8 75.5Q781.3 74.5 785.3 77.0V58.5Q784.3 55.0 779.8 55.0Q775.8 55.0 772.8 58.5V78.0" fill="none" stroke="#2e9fd8" stroke-width="1.6" stroke-linejoin="round"/><circle cx="782.0" cy="72" r="5.4" fill="#fff"/><path d="M782.5 67.4a4.2 4.4 0 0 1 4.2 4.4q0 2.2-1.8 4v2h-4.8v-2q-1.8-1.8-1.8-4a4.2 4.4 0 0 1 4.2-4.4z" fill="#c6d6de"/><rect x="780.6" y="78.4" width="3.8" height="1.2" fill="#c6d6de"/><rect x="781.2" y="80.1" width="2.6" height="1.1" fill="#c6d6de"/></g><g transform="translate(1131.45 929.35) scale(0.75)"><rect x="936.2" y="56.0" width="10.7" height="10" rx="2.2" fill="#2b93c4"/><rect x="936.2" y="70.0" width="10.7" height="10" rx="2.2" fill="#2b93c4"/><rect x="950.6" y="70.0" width="10.7" height="10" rx="2.2" fill="#2b93c4"/><rect x="950.8" y="55.8" width="10.4" height="9.6" rx="1.5" fill="#fff" stroke="#8c8c8c" stroke-width="1.1"/><path d="M950.8 60.5h10.4" stroke="#9a9a9a" stroke-width="1"/><path d="M956.4 55.5v10.2" stroke="#ff0000" stroke-width="1.2"/></g><g transform="translate(948.55 929.35) scale(0.75)"><circle cx="1232.7" cy="61.8" r="5.8" fill="#ff0000"/><path d="M1230.1 66.5h5.2l1 4.5h3.5q3.5 0 3.5 3v1.8h-21.4v-1.8q0-3 3.5-3h3.5z" fill="#ff0000"/><rect x="1222.0" y="77.0" width="21.4" height="2.6" fill="#ff0000"/></g><g transform="translate(927.55 929.35) scale(0.75)"><path d="M1294.7 57.9q4.7 -3.3 7.0 1.4q5.1 -4.2 8.8 1.4q4.7 6.0 0.9 11.2q-0.9 6.5 -7.0 6.0q-5.6 2.8 -9.3 -2.3q-5.1 -5.1 -2.8 -9.8q-1.9 -6.5 2.3 -7.9z" fill="#6ab04c" stroke="#2a2a2a" stroke-width="1.1"/><path d="M1295.5 70.5l10.5 10M1306.0 70.5l-10.5 10" stroke="#e63b1f" stroke-width="2.2"/></g><path d="M1743 972h13.4M1749.7 971v19" stroke="#2b93b8" stroke-width="2.6" fill="none"/><path d="M1754.8 980.6h8.4M1759 980v10" stroke="#f0a30a" stroke-width="2.4" fill="none"/><path d="M697.7 1015.4L697.7 1017.8L695.3 1018.7L694.6 1020.3L695.7 1022.7L694.1 1024.3L691.7 1023.2L690.1 1023.9L689.2 1026.3L686.8 1026.3L685.9 1023.9L684.3 1023.2L681.9 1024.3L680.3 1022.7L681.4 1020.3L680.7 1018.7L678.3 1017.8L678.3 1015.4L680.7 1014.5L681.4 1012.9L680.3 1010.5L681.9 1008.9L684.3 1010.0L685.9 1009.3L686.8 1006.9L689.2 1006.9L690.1 1009.3L691.7 1010.0L694.1 1008.9L695.7 1010.5L694.6 1012.9L695.3 1014.5z" fill="none" stroke="#3aa5e0" stroke-width="1.1" stroke-linejoin="round"/><circle cx="688" cy="1016.6" r="4" fill="none" stroke="#3aa5e0" stroke-width="1.1"/><rect x="712.6" y="1008" width="20.6" height="2.7" fill="#1e96dc"/><rect x="712.6" y="1023.3" width="20.6" height="2.7" fill="#1e96dc"/><rect x="712.6" y="1015.6" width="3.6" height="2.6" fill="#1e96dc"/><rect x="718.4" y="1015.6" width="8" height="2.6" fill="#1e96dc"/><path d="M733.4 1016.9l-6.4-4.4v8.8z" fill="#1e96dc"/><rect x="748.4" y="1007.6" width="19" height="19" fill="#fff" stroke="#3aa5e0" stroke-width="1.5"/><circle cx="757.9" cy="1016.8" r="2.6" fill="none" stroke="#444" stroke-width="0.8"/><path d="M753 1016.8h9.8M757.9 1012v9.6" stroke="#444" stroke-width="0.8"/><path d="M785.4 1006.2h10.5l5 5v15.6h-15.5z" fill="#fff" stroke="#3aa5e0" stroke-width="1.3" stroke-linejoin="round"/><path d="M795.9 1006.2v5h5" fill="none" stroke="#3aa5e0" stroke-width="1.1"/><path d="M783.0 1014.6H795.0" stroke="#8cc63f" stroke-width="2.6"/><path d="M799.5 1014.6l-4.5 -3.8v7.6z" fill="#8cc63f"/><rect x="783.8" y="1019.0" width="19.2" height="7.4" fill="#fff" stroke="#3aa5e0" stroke-width="1"/><text x="793.4" y="1024.8" font-size="7.6" font-weight="bold" fill="#111" text-anchor="middle" font-family="Liberation Sans,sans-serif" textLength="16.2" lengthAdjust="spacingAndGlyphs">DWG</text><rect x="818.2" y="1007" width="20" height="19.6" fill="#fff" stroke="#3aa5e0" stroke-width="1.6"/><path d="M821.6 1023.4L836.8 1008.6M821.6 1023.4H837" stroke="#f5a623" stroke-width="0.9"/><circle cx="821.6" cy="1023.2" r="2.3" fill="#f0a30a"/><rect x="857" y="1008.2" width="11" height="3.8" rx="1.9" fill="#7ba3b8"/><rect x="857" y="1015" width="11" height="3.8" rx="1.9" fill="#7ba3b8"/><rect x="857" y="1022" width="11" height="3.8" rx="1.9" fill="#7ba3b8"/><circle cx="871.2" cy="1012.6" r="2.9" fill="#fff" stroke="#9ab" stroke-width="0.5"/><path d="M869.4000000000001 1010.8000000000001l3.6 3.6M873.0 1010.8000000000001l-3.6 3.6" stroke="#e8401c" stroke-width="1.2"/><circle cx="853.6" cy="1021.2" r="2.9" fill="#fff" stroke="#9ab" stroke-width="0.5"/><path d="M851.8000000000001 1019.4000000000001l3.6 3.6M855.4 1019.4000000000001l-3.6 3.6" stroke="#e8401c" stroke-width="1.2"/><path d="M890.4 1006.2h10.5l5 5v15.6h-15.5z" fill="#fff" stroke="#3aa5e0" stroke-width="1.3" stroke-linejoin="round"/><path d="M900.9 1006.2v5h5" fill="none" stroke="#3aa5e0" stroke-width="1.1"/><path d="M902.4 1011.9L902.4 1012.9L901.1 1013.4L900.8 1014.2L901.3 1015.4L900.6 1016.1L899.4 1015.6L898.6 1015.9L898.1 1017.2L897.1 1017.2L896.6 1015.9L895.8 1015.6L894.6 1016.1L893.9 1015.4L894.4 1014.2L894.1 1013.4L892.8 1012.9L892.8 1011.9L894.1 1011.4L894.4 1010.6L893.9 1009.4L894.6 1008.7L895.8 1009.2L896.6 1008.9L897.1 1007.6L898.1 1007.6L898.6 1008.9L899.4 1009.2L900.6 1008.7L901.3 1009.4L900.8 1010.6L901.1 1011.4z" fill="#f3a91f" stroke="#f3a91f" stroke-width="0.8" stroke-linejoin="round"/><circle cx="897.6" cy="1012.4" r="1.8" fill="#fff"/><rect x="888.4" y="1019.4" width="20.4" height="7.4" fill="#fff" stroke="#3aa5e0" stroke-width="1.1"/><path d="M891.5 1023.1H901.6" stroke="#8cc63f" stroke-width="1.8"/><path d="M905.0 1023.1l-3.4 -2.4v4.8z" fill="#8cc63f"/><path d="M925.2 1006.2h10.5l5 5v15.6h-15.5z" fill="#fff" stroke="#3aa5e0" stroke-width="1.3" stroke-linejoin="round"/><path d="M935.7 1006.2v5h5" fill="none" stroke="#3aa5e0" stroke-width="1.1"/><path d="M922.8 1014.6H935.0" stroke="#8cc63f" stroke-width="2.6"/><path d="M939.5 1014.6l-4.5 -3.8v7.6z" fill="#8cc63f"/><rect x="923.4" y="1019.0" width="19.6" height="7.4" fill="#fff" stroke="#3aa5e0" stroke-width="1"/><text x="933.2" y="1024.8" font-size="7.6" font-weight="bold" fill="#5a2d2d" text-anchor="middle" font-family="Liberation Sans,sans-serif" textLength="16.6" lengthAdjust="spacingAndGlyphs">PDF</text></svg>
<svg class="r" style="left:207px;top:171px;overflow:hidden" width="1502" height="758" viewBox="207 171 1502 758" shape-rendering="crispEdges"><path d="M868.5 186.5L1044.5 186.5M868.5 228.5L1044.5 228.5M868.5 186.5L868.5 228.5M1044.5 186.5L1044.5 228.5M1053.5 186.5L1225.5 186.5M1053.5 228.5L1225.5 228.5M1053.5 186.5L1053.5 228.5M1225.5 186.5L1225.5 228.5M1234.5 186.5L1410.5 186.5M1234.5 228.5L1410.5 228.5M1234.5 186.5L1234.5 228.5M1410.5 186.5L1410.5 228.5M868.5 235.5L955.5 235.5M868.5 364.5L955.5 364.5M868.5 235.5L868.5 364.5M955.5 235.5L955.5 364.5M960.5 235.5L1044.5 235.5M960.5 364.5L1044.5 364.5M960.5 235.5L960.5 364.5M1044.5 235.5L1044.5 364.5M1053.5 235.5L1136.5 235.5M1053.5 364.5L1136.5 364.5M1053.5 235.5L1053.5 364.5M1136.5 235.5L1136.5 364.5M1142.5 235.5L1225.5 235.5M1142.5 364.5L1225.5 364.5M1142.5 235.5L1142.5 364.5M1225.5 235.5L1225.5 364.5M1234.5 235.5L1317.5 235.5M1234.5 364.5L1317.5 364.5M1234.5 235.5L1234.5 364.5M1317.5 235.5L1317.5 364.5M1323.5 235.5L1410.5 235.5M1323.5 364.5L1410.5 364.5M1323.5 235.5L1323.5 364.5M1410.5 235.5L1410.5 364.5M870.5 371.5L955.5 371.5M870.5 500.5L955.5 500.5M870.5 371.5L870.5 500.5M955.5 371.5L955.5 500.5M870.5 507.5L955.5 507.5M870.5 636.5L955.5 636.5M870.5 507.5L870.5 636.5M955.5 507.5L955.5 636.5M960.5 371.5L1045.5 371.5M960.5 500.5L1045.5 500.5M960.5 371.5L960.5 500.5M1045.5 371.5L1045.5 500.5M960.5 507.5L1045.5 507.5M960.5 636.5L1045.5 636.5M960.5 507.5L960.5 636.5M1045.5 507.5L1045.5 636.5M1052.5 371.5L1136.5 371.5M1052.5 500.5L1136.5 500.5M1052.5 371.5L1052.5 500.5M1136.5 371.5L1136.5 500.5M1052.5 507.5L1136.5 507.5M1052.5 636.5L1136.5 636.5M1052.5 507.5L1052.5 636.5M1136.5 507.5L1136.5 636.5M1142.5 371.5L1226.5 371.5M1142.5 500.5L1226.5 500.5M1142.5 371.5L1142.5 500.5M1226.5 371.5L1226.5 500.5M1142.5 507.5L1226.5 507.5M1142.5 636.5L1226.5 636.5M1142.5 507.5L1142.5 636.5M1226.5 507.5L1226.5 636.5M1233.5 371.5L1317.5 371.5M1233.5 500.5L1317.5 500.5M1233.5 371.5L1233.5 500.5M1317.5 371.5L1317.5 500.5M1233.5 507.5L1317.5 507.5M1233.5 636.5L1317.5 636.5M1233.5 507.5L1233.5 636.5M1317.5 507.5L1317.5 636.5M1323.5 371.5L1410.5 371.5M1323.5 500.5L1410.5 500.5M1323.5 371.5L1323.5 500.5M1410.5 371.5L1410.5 500.5M1323.5 507.5L1410.5 507.5M1323.5 636.5L1410.5 636.5M1323.5 507.5L1323.5 636.5M1410.5 507.5L1410.5 636.5M870.5 643.5L973.5 643.5M870.5 772.5L973.5 772.5M870.5 643.5L870.5 772.5M973.5 643.5L973.5 772.5M1054.5 643.5L1136.5 643.5M1054.5 772.5L1136.5 772.5M1054.5 643.5L1054.5 772.5M1136.5 643.5L1136.5 772.5M1142.5 643.5L1225.5 643.5M1142.5 772.5L1225.5 772.5M1142.5 643.5L1142.5 772.5M1225.5 643.5L1225.5 772.5M1234.5 643.5L1317.5 643.5M1234.5 772.5L1317.5 772.5M1234.5 643.5L1234.5 772.5M1317.5 643.5L1317.5 772.5M1323.5 643.5L1410.5 643.5M1323.5 772.5L1410.5 772.5M1323.5 643.5L1323.5 772.5M1410.5 643.5L1410.5 772.5M872.5 779.5L1044.5 779.5M872.5 821.5L1044.5 821.5M872.5 779.5L872.5 821.5M1044.5 779.5L1044.5 821.5M1053.5 779.5L1225.5 779.5M1053.5 821.5L1225.5 821.5M1053.5 779.5L1053.5 821.5M1225.5 779.5L1225.5 821.5M1234.5 779.5L1410.5 779.5M1234.5 821.5L1410.5 821.5M1234.5 779.5L1234.5 821.5M1410.5 779.5L1410.5 821.5M760.5 369.5L811.5 369.5M760.5 500.5L811.5 500.5M760.5 369.5L760.5 500.5M811.5 369.5L811.5 500.5M816.5 369.5L863.5 369.5M816.5 500.5L863.5 500.5M816.5 369.5L816.5 500.5M863.5 369.5L863.5 500.5M504.5 458.5L680.5 458.5M504.5 500.5L680.5 500.5M504.5 458.5L504.5 500.5M680.5 458.5L680.5 500.5M504.5 507.5L592.5 507.5M504.5 636.5L592.5 636.5M504.5 507.5L504.5 636.5M592.5 507.5L592.5 636.5M598.5 507.5L682.5 507.5M598.5 636.5L682.5 636.5M598.5 507.5L598.5 636.5M682.5 507.5L682.5 636.5M504.5 643.5L592.5 643.5M504.5 772.5L592.5 772.5M504.5 643.5L504.5 772.5M592.5 643.5L592.5 772.5M598.5 643.5L682.5 643.5M598.5 772.5L682.5 772.5M598.5 643.5L598.5 772.5M682.5 643.5L682.5 772.5M504.5 779.5L592.5 779.5M504.5 912.5L592.5 912.5M504.5 779.5L504.5 912.5M592.5 779.5L592.5 912.5M598.5 779.5L682.5 779.5M598.5 912.5L682.5 912.5M598.5 779.5L598.5 912.5M682.5 779.5L682.5 912.5M689.5 779.5L773.5 779.5M689.5 912.5L773.5 912.5M689.5 779.5L689.5 912.5M773.5 779.5L773.5 912.5M779.5 779.5L866.5 779.5M779.5 912.5L866.5 912.5M779.5 779.5L779.5 912.5M866.5 779.5L866.5 912.5M689.5 643.5L773.5 643.5M689.5 772.5L773.5 772.5M689.5 643.5L689.5 772.5M773.5 643.5L773.5 772.5M779.5 643.5L863.5 643.5M779.5 772.5L863.5 772.5M779.5 643.5L779.5 772.5M863.5 643.5L863.5 772.5M689.5 507.5L739.5 507.5M689.5 517.5L739.5 517.5M689.5 507.5L689.5 517.5M739.5 507.5L739.5 517.5M743.5 507.5L773.5 507.5M743.5 572.5L773.5 572.5M743.5 507.5L743.5 572.5M773.5 507.5L773.5 572.5M689.5 577.5L773.5 577.5M689.5 636.5L773.5 636.5M689.5 577.5L689.5 636.5M773.5 577.5L773.5 636.5M779.5 507.5L863.5 507.5M779.5 636.5L863.5 636.5M779.5 507.5L779.5 636.5M863.5 507.5L863.5 636.5" stroke="#00ffff" stroke-width="1" fill="none" stroke-dasharray="7 2.2"/><path d="M861.5 180.5L1417.5 180.5M1417.5 180.5L1417.5 827.5M872.5 827.5L1417.5 827.5M861.5 180.5L861.5 362.5M872.5 827.5L872.5 918.5M497.5 918.5L872.5 918.5M497.5 453.5L497.5 918.5M497.5 453.5L680.5 453.5M680.5 374.5L680.5 453.5M692.5 362.5L861.5 362.5M687.5 374.5L687.5 497.5M692.5 369.5L755.5 369.5M755.5 369.5L755.5 500.5M692.5 500.5L755.5 500.5M689.5 522.5L739.5 522.5M739.5 522.5L739.5 572.5M689.5 572.5L739.5 572.5M689.5 522.5L689.5 572.5M979.5 643.5L1041.5 643.5M979.5 643.5L979.5 772.5M979.5 772.5L1041.5 772.5M1047.5 646.5L1047.5 769.5" stroke="#00ffff" stroke-width="1" fill="none" stroke-linecap="square"/><rect x="497.5" y="497.5" width="14" height="13" fill="#000"/><rect x="497.5" y="633.5" width="14" height="13" fill="#000"/><rect x="497.5" y="769.5" width="14" height="13" fill="#000"/><rect x="497.5" y="905.5" width="14" height="13" fill="#000"/><rect x="679.5" y="361.5" width="13" height="13" fill="#000"/><rect x="679.5" y="497.5" width="13" height="13" fill="#000"/><rect x="679.5" y="633.5" width="13" height="13" fill="#000"/><rect x="679.5" y="769.5" width="13" height="13" fill="#000"/><rect x="679.5" y="905.5" width="13" height="13" fill="#000"/><rect x="860.5" y="225.5" width="14" height="13" fill="#000"/><rect x="860.5" y="361.5" width="14" height="13" fill="#000"/><rect x="860.5" y="497.5" width="14" height="13" fill="#000"/><rect x="860.5" y="633.5" width="14" height="13" fill="#000"/><rect x="860.5" y="769.5" width="14" height="13" fill="#000"/><rect x="860.5" y="905.5" width="14" height="13" fill="#000"/><rect x="1041.5" y="225.5" width="14" height="13" fill="#000"/><rect x="1041.5" y="361.5" width="14" height="13" fill="#000"/><rect x="1041.5" y="497.5" width="14" height="13" fill="#000"/><rect x="1041.5" y="633.5" width="14" height="13" fill="#000"/><rect x="1041.5" y="769.5" width="14" height="13" fill="#000"/><rect x="1223.5" y="225.5" width="13" height="13" fill="#000"/><rect x="1223.5" y="361.5" width="13" height="13" fill="#000"/><rect x="1223.5" y="497.5" width="13" height="13" fill="#000"/><rect x="1223.5" y="633.5" width="13" height="13" fill="#000"/><rect x="1223.5" y="769.5" width="13" height="13" fill="#000"/><rect x="1404.5" y="225.5" width="14" height="13" fill="#000"/><rect x="1404.5" y="361.5" width="14" height="13" fill="#000"/><rect x="1404.5" y="497.5" width="14" height="13" fill="#000"/><rect x="1404.5" y="633.5" width="14" height="13" fill="#000"/><rect x="1404.5" y="769.5" width="14" height="13" fill="#000"/><path d="M502.5 497.5H497.5V501.5M497.5 504.7V510.5H502.5M505.7 510.5H511.5V504.7M511.5 501.5V497.5H505.7M497.5 497.5V510.5M502.5 633.5H497.5V637.5M497.5 640.7V646.5H502.5M505.7 646.5H511.5V640.7M511.5 637.5V633.5H505.7M497.5 633.5V646.5M502.5 769.5H497.5V773.5M497.5 776.7V782.5H502.5M505.7 782.5H511.5V776.7M511.5 773.5V769.5H505.7M497.5 769.5V782.5M497.5 905.5h14v13h-14zM679.5 361.5h13v13h-13zM679.5 497.5h13v13h-13zM683.5 633.5H679.5V637.5M679.5 640.7V646.5H683.5M686.7 646.5H692.5V640.7M692.5 637.5V633.5H686.7M683.5 769.5H679.5V773.5M679.5 776.7V782.5H683.5M686.7 782.5H692.5V776.7M692.5 773.5V769.5H686.7M679.5 905.5h13v13h-13zM865.5 225.5H860.5V229.5M860.5 232.7V238.5H865.5M868.7 238.5H874.5V232.7M874.5 229.5V225.5H868.7M860.5 225.5V238.5M865.5 361.5H860.5V365.5M860.5 368.7V374.5H865.5M868.7 374.5H874.5V368.7M874.5 365.5V361.5H868.7M865.5 497.5H860.5V501.5M860.5 504.7V510.5H865.5M868.7 510.5H874.5V504.7M874.5 501.5V497.5H868.7M865.5 633.5H860.5V637.5M860.5 640.7V646.5H865.5M868.7 646.5H874.5V640.7M874.5 637.5V633.5H868.7M865.5 769.5H860.5V773.5M860.5 776.7V782.5H865.5M868.7 782.5H874.5V776.7M874.5 773.5V769.5H868.7M860.5 905.5h14v13h-14zM1046.5 225.5H1041.5V229.5M1041.5 232.7V238.5H1046.5M1049.7 238.5H1055.5V232.7M1055.5 229.5V225.5H1049.7M1046.5 361.5H1041.5V365.5M1041.5 368.7V374.5H1046.5M1049.7 374.5H1055.5V368.7M1055.5 365.5V361.5H1049.7M1046.5 497.5H1041.5V501.5M1041.5 504.7V510.5H1046.5M1049.7 510.5H1055.5V504.7M1055.5 501.5V497.5H1049.7M1041.5 633.5h14v13h-14zM1041.5 769.5h14v13h-14zM1227.5 225.5H1223.5V229.5M1223.5 232.7V238.5H1227.5M1230.7 238.5H1236.5V232.7M1236.5 229.5V225.5H1230.7M1227.5 361.5H1223.5V365.5M1223.5 368.7V374.5H1227.5M1230.7 374.5H1236.5V368.7M1236.5 365.5V361.5H1230.7M1227.5 497.5H1223.5V501.5M1223.5 504.7V510.5H1227.5M1230.7 510.5H1236.5V504.7M1236.5 501.5V497.5H1230.7M1227.5 633.5H1223.5V637.5M1223.5 640.7V646.5H1227.5M1230.7 646.5H1236.5V640.7M1236.5 637.5V633.5H1230.7M1227.5 769.5H1223.5V773.5M1223.5 776.7V782.5H1227.5M1230.7 782.5H1236.5V776.7M1236.5 773.5V769.5H1230.7M1409.5 225.5H1404.5V229.5M1404.5 232.7V238.5H1409.5M1412.7 238.5H1418.5V232.7M1418.5 229.5V225.5H1412.7M1418.5 225.5V238.5M1409.5 361.5H1404.5V365.5M1404.5 368.7V374.5H1409.5M1412.7 374.5H1418.5V368.7M1418.5 365.5V361.5H1412.7M1418.5 361.5V374.5M1409.5 497.5H1404.5V501.5M1404.5 504.7V510.5H1409.5M1412.7 510.5H1418.5V504.7M1418.5 501.5V497.5H1412.7M1418.5 497.5V510.5M1409.5 633.5H1404.5V637.5M1404.5 640.7V646.5H1409.5M1412.7 646.5H1418.5V640.7M1418.5 637.5V633.5H1412.7M1418.5 633.5V646.5M1409.5 769.5H1404.5V773.5M1404.5 776.7V782.5H1409.5M1412.7 782.5H1418.5V776.7M1418.5 773.5V769.5H1412.7M1418.5 769.5V782.5" stroke="#ffff00" stroke-width="1" fill="none" stroke-linecap="square"/><polyline points="754.5,369.5 704,387.5 687.5,490.5 687.5,497.5" stroke="#0000ff" stroke-width="1.2" fill="none"/><polyline points="739,522.5 702,534 689.5,570" stroke="#0000ff" stroke-width="1.2" fill="none"/><polyline points="1041.5,644 995,656 991.5,684 979.5,768" stroke="#0000ff" stroke-width="1.2" fill="none"/><path d="M945.5 182.5L945.5 199.5M945.5 182.5L948.5 182.5M945.5 199.5L948.5 199.5M1128.5 182.5L1128.5 199.5M1128.5 182.5L1131.5 182.5M1128.5 199.5L1131.5 199.5M1310.5 182.5L1310.5 199.5M1310.5 182.5L1313.5 182.5M1310.5 199.5L1313.5 199.5M968.5 184L968.5 232M1150.5 184L1150.5 232M1333.5 184L1333.5 232M862.5 203.5L880.5 203.5M862.5 203.5L862.5 206.5M880.5 203.5L880.5 206.5M1031.5 203.5L1065.5 203.5M1031.5 203.5L1031.5 206.5M1065.5 203.5L1065.5 206.5M1213.5 203.5L1247.5 203.5M1213.5 203.5L1213.5 206.5M1247.5 203.5L1247.5 206.5M1397.5 203.5L1416.5 203.5M1397.5 203.5L1397.5 206.5M1416.5 203.5L1416.5 206.5M1012.5 809.5L1012.5 826.5M1012.5 809.5L1015.5 809.5M1012.5 826.5L1015.5 826.5M1128.5 809.5L1128.5 826.5M1128.5 809.5L1131.5 809.5M1128.5 826.5L1131.5 826.5M1310.5 809.5L1310.5 826.5M1310.5 809.5L1313.5 809.5M1310.5 826.5L1313.5 826.5M1012.5 773.5L1012.5 792.5M1012.5 773.5L1015.5 773.5M1012.5 792.5L1015.5 792.5M970.5 776L970.5 823.5M1150.5 776L1150.5 823.5M1333.5 776L1333.5 823.5M1031.5 795.5L1065.5 795.5M1031.5 795.5L1031.5 798.5M1065.5 795.5L1065.5 798.5M1213.5 795.5L1247.5 795.5M1213.5 795.5L1213.5 798.5M1247.5 795.5L1247.5 798.5M1397.5 795.5L1416.5 795.5M1397.5 795.5L1397.5 798.5M1416.5 795.5L1416.5 798.5M870 805.5L1048.5 805.5M1106.5 232L1106.5 776M1196.5 232L1196.5 776M1286.5 232L1286.5 776M1378.5 232L1378.5 776M923.5 232L923.5 640M1018.5 232L1018.5 640M933.5 640L933.5 776M865 311.5L1414 311.5M758 446.5L1414 446.5M777 583.5L1414 583.5M1051 719.5L1414 719.5M900.5 204.5L900.5 259.5M900.5 204.5L903.5 204.5M900.5 259.5L903.5 259.5M900.5 340.5L900.5 395.5M900.5 340.5L903.5 340.5M900.5 395.5L903.5 395.5M900.5 478.5L900.5 530.5M900.5 478.5L903.5 478.5M900.5 530.5L903.5 530.5M992.5 205.5L992.5 258.5M992.5 205.5L995.5 205.5M992.5 258.5L995.5 258.5M992.5 341.5L992.5 394.5M992.5 341.5L995.5 341.5M992.5 394.5L995.5 394.5M992.5 477.5L992.5 530.5M992.5 477.5L995.5 477.5M992.5 530.5L995.5 530.5M1082.5 205.5L1082.5 258.5M1082.5 205.5L1085.5 205.5M1082.5 258.5L1085.5 258.5M1082.5 341.5L1082.5 394.5M1082.5 341.5L1085.5 341.5M1082.5 394.5L1085.5 394.5M1082.5 477.5L1082.5 530.5M1082.5 477.5L1085.5 477.5M1082.5 530.5L1085.5 530.5M1173.5 205.5L1173.5 258.5M1173.5 205.5L1176.5 205.5M1173.5 258.5L1176.5 258.5M1173.5 341.5L1173.5 394.5M1173.5 341.5L1176.5 341.5M1173.5 394.5L1176.5 394.5M1173.5 477.5L1173.5 530.5M1173.5 477.5L1176.5 477.5M1173.5 530.5L1176.5 530.5M1264.5 205.5L1264.5 258.5M1264.5 205.5L1267.5 205.5M1264.5 258.5L1267.5 258.5M1264.5 341.5L1264.5 394.5M1264.5 341.5L1267.5 341.5M1264.5 394.5L1267.5 394.5M1264.5 477.5L1264.5 530.5M1264.5 477.5L1267.5 477.5M1264.5 530.5L1267.5 530.5M1355.5 204.5L1355.5 259.5M1355.5 204.5L1358.5 204.5M1355.5 259.5L1358.5 259.5M1355.5 340.5L1355.5 395.5M1355.5 340.5L1358.5 340.5M1355.5 395.5L1358.5 395.5M1355.5 476.5L1355.5 531.5M1355.5 476.5L1358.5 476.5M1355.5 531.5L1358.5 531.5M912.5 608.5L912.5 671.5M912.5 608.5L915.5 608.5M912.5 671.5L915.5 671.5M967.5 608.5L967.5 671.5M967.5 608.5L970.5 608.5M967.5 671.5L970.5 671.5M1012.5 614.5L1012.5 642.5M1012.5 614.5L1015.5 614.5M1012.5 642.5L1015.5 642.5M1083.5 614.5L1083.5 666.5M1083.5 614.5L1086.5 614.5M1083.5 666.5L1086.5 666.5M1173.5 614.5L1173.5 666.5M1173.5 614.5L1176.5 614.5M1173.5 666.5L1176.5 666.5M1264.5 614.5L1264.5 666.5M1264.5 614.5L1267.5 614.5M1264.5 666.5L1267.5 666.5M1355.5 612.5L1355.5 667.5M1355.5 612.5L1358.5 612.5M1355.5 667.5L1358.5 667.5M923.5 744.5L923.5 826.5M923.5 744.5L926.5 744.5M923.5 826.5L926.5 826.5M1083.5 750.5L1083.5 802.5M1083.5 750.5L1086.5 750.5M1083.5 802.5L1086.5 802.5M1184.5 750.5L1184.5 802.5M1184.5 750.5L1187.5 750.5M1184.5 802.5L1187.5 802.5M1264.5 750.5L1264.5 802.5M1264.5 750.5L1267.5 750.5M1264.5 802.5L1267.5 802.5M1367.5 748.5L1367.5 803.5M1367.5 748.5L1370.5 748.5M1367.5 803.5L1370.5 803.5M862.5 288.5L892.5 288.5M862.5 288.5L862.5 291.5M892.5 288.5L892.5 291.5M931.5 288.5L984.5 288.5M931.5 288.5L931.5 291.5M984.5 288.5L984.5 291.5M1021.5 288.5L1075.5 288.5M1021.5 288.5L1021.5 291.5M1075.5 288.5L1075.5 291.5M1113.5 288.5L1164.5 288.5M1113.5 288.5L1113.5 291.5M1164.5 288.5L1164.5 291.5M1202.5 288.5L1257.5 288.5M1202.5 288.5L1202.5 291.5M1257.5 288.5L1257.5 291.5M1294.5 288.5L1347.5 288.5M1294.5 288.5L1294.5 291.5M1347.5 288.5L1347.5 291.5M1386.5 288.5L1416.5 288.5M1386.5 288.5L1386.5 291.5M1416.5 288.5L1416.5 291.5M841.5 424.5L893.5 424.5M841.5 424.5L841.5 427.5M893.5 424.5L893.5 427.5M932.5 424.5L983.5 424.5M932.5 424.5L932.5 427.5M983.5 424.5L983.5 427.5M1022.5 424.5L1075.5 424.5M1022.5 424.5L1022.5 427.5M1075.5 424.5L1075.5 427.5M1113.5 424.5L1164.5 424.5M1113.5 424.5L1113.5 427.5M1164.5 424.5L1164.5 427.5M1203.5 424.5L1256.5 424.5M1203.5 424.5L1203.5 427.5M1256.5 424.5L1256.5 427.5M1294.5 424.5L1347.5 424.5M1294.5 424.5L1294.5 427.5M1347.5 424.5L1347.5 427.5M1386.5 424.5L1416.5 424.5M1386.5 424.5L1386.5 427.5M1416.5 424.5L1416.5 427.5M841.5 560.5L893.5 560.5M841.5 560.5L841.5 563.5M893.5 560.5L893.5 563.5M932.5 560.5L983.5 560.5M932.5 560.5L932.5 563.5M983.5 560.5L983.5 563.5M1022.5 560.5L1075.5 560.5M1022.5 560.5L1022.5 563.5M1075.5 560.5L1075.5 563.5M1113.5 560.5L1164.5 560.5M1113.5 560.5L1113.5 563.5M1164.5 560.5L1164.5 563.5M1203.5 560.5L1256.5 560.5M1203.5 560.5L1203.5 563.5M1256.5 560.5L1256.5 563.5M1294.5 560.5L1347.5 560.5M1294.5 560.5L1294.5 563.5M1347.5 560.5L1347.5 563.5M1386.5 560.5L1416.5 560.5M1386.5 560.5L1386.5 563.5M1416.5 560.5L1416.5 563.5M836.5 696.5L899.5 696.5M836.5 696.5L836.5 699.5M899.5 696.5L899.5 699.5M945.5 696.5L978.5 696.5M945.5 696.5L945.5 699.5M978.5 696.5L978.5 699.5M1048.5 696.5L1077.5 696.5M1048.5 696.5L1048.5 699.5M1077.5 696.5L1077.5 699.5M1113.5 696.5L1164.5 696.5M1113.5 696.5L1113.5 699.5M1164.5 696.5L1164.5 699.5M1202.5 696.5L1257.5 696.5M1202.5 696.5L1202.5 699.5M1257.5 696.5L1257.5 699.5M1294.5 696.5L1347.5 696.5M1294.5 696.5L1294.5 699.5M1347.5 696.5L1347.5 699.5M1386.5 696.5L1416.5 696.5M1386.5 696.5L1386.5 699.5M1416.5 696.5L1416.5 699.5M581.5 454.5L581.5 471.5M581.5 454.5L584.5 454.5M581.5 471.5L584.5 471.5M603.5 456.5L603.5 503.5M498.5 475.5L517.5 475.5M498.5 475.5L498.5 478.5M517.5 475.5L517.5 478.5M667.5 475.5L685.5 475.5M667.5 475.5L667.5 478.5M685.5 475.5L685.5 478.5M559.5 504L559.5 915.5M651.5 504L651.5 915.5M834.5 504L834.5 915.5M742.5 575.5L742.5 915.5M536.5 476.5L536.5 531.5M536.5 476.5L539.5 476.5M536.5 531.5L539.5 531.5M536.5 612.5L536.5 667.5M536.5 612.5L539.5 612.5M536.5 667.5L539.5 667.5M536.5 748.5L536.5 803.5M536.5 748.5L539.5 748.5M536.5 803.5L539.5 803.5M629.5 478.5L629.5 530.5M629.5 478.5L632.5 478.5M629.5 530.5L632.5 530.5M629.5 614.5L629.5 666.5M629.5 614.5L632.5 614.5M629.5 666.5L632.5 666.5M629.5 750.5L629.5 802.5M629.5 750.5L632.5 750.5M629.5 802.5L632.5 802.5M719.5 614.5L719.5 666.5M719.5 614.5L722.5 614.5M719.5 666.5L722.5 666.5M719.5 750.5L719.5 802.5M719.5 750.5L722.5 750.5M719.5 802.5L722.5 802.5M810.5 614.5L810.5 666.5M810.5 614.5L813.5 614.5M810.5 666.5L813.5 666.5M812.5 748.5L812.5 803.5M812.5 748.5L815.5 748.5M812.5 803.5L815.5 803.5M536.5 888.5L536.5 917.5M536.5 888.5L539.5 888.5M536.5 917.5L539.5 917.5M629.5 889.5L629.5 917.5M629.5 889.5L632.5 889.5M629.5 917.5L632.5 917.5M719.5 889.5L719.5 917.5M719.5 889.5L722.5 889.5M719.5 917.5L722.5 917.5M811.5 888.5L811.5 917.5M811.5 888.5L814.5 888.5M811.5 917.5L814.5 917.5M498.5 560.5L528.5 560.5M498.5 560.5L498.5 563.5M528.5 560.5L528.5 563.5M568.5 560.5L621.5 560.5M568.5 560.5L568.5 563.5M621.5 560.5L621.5 563.5M498.5 696.5L528.5 696.5M498.5 696.5L498.5 699.5M528.5 696.5L528.5 699.5M568.5 696.5L621.5 696.5M568.5 696.5L568.5 699.5M621.5 696.5L621.5 699.5M498.5 834.5L528.5 834.5M498.5 834.5L498.5 837.5M528.5 834.5L528.5 837.5M568.5 834.5L621.5 834.5M568.5 834.5L568.5 837.5M621.5 834.5L621.5 837.5M659.5 512.5L711.5 512.5M659.5 512.5L659.5 515.5M711.5 512.5L711.5 515.5M659.5 547.5L688.5 547.5M659.5 547.5L659.5 550.5M688.5 547.5L688.5 550.5M659.5 602.5L711.5 602.5M659.5 602.5L659.5 605.5M711.5 602.5L711.5 605.5M659.5 696.5L711.5 696.5M659.5 696.5L659.5 699.5M711.5 696.5L711.5 699.5M751.5 696.5L802.5 696.5M751.5 696.5L751.5 699.5M802.5 696.5L802.5 699.5M659.5 834.5L711.5 834.5M659.5 834.5L659.5 837.5M711.5 834.5L711.5 837.5M749.5 834.5L803.5 834.5M749.5 834.5L749.5 837.5M803.5 834.5L803.5 837.5M842.5 800.5L896.5 800.5M842.5 800.5L842.5 803.5M896.5 800.5L896.5 803.5M842.5 869.5L871.5 869.5M842.5 869.5L842.5 872.5M871.5 869.5L871.5 872.5M501 583.5L686 583.5M686 612.5L777 612.5M501 719.5L976.5 719.5M501 857.5L870 857.5M781.5 363.5L781.5 383.5M781.5 363.5L784.5 363.5M781.5 383.5L784.5 383.5M836.5 363.5L836.5 382.5M836.5 363.5L839.5 363.5M836.5 382.5L839.5 382.5M790.5 366L790.5 503.5M846.5 366L846.5 503.5M756.5 423.5L775.5 423.5M756.5 423.5L756.5 426.5M775.5 423.5L775.5 426.5M796.5 423.5L831.5 423.5M796.5 423.5L796.5 426.5M831.5 423.5L831.5 426.5M795.5 478.5L795.5 530.5M795.5 478.5L798.5 478.5M795.5 530.5L798.5 530.5M840.5 478.5L840.5 530.5M840.5 478.5L843.5 478.5M840.5 530.5L843.5 530.5M767.5 485.5L767.5 522.5M767.5 485.5L770.5 485.5M767.5 522.5L770.5 522.5M727.5 512.5L802.5 512.5M727.5 512.5L727.5 515.5M802.5 512.5L802.5 515.5M713.5 502.5L713.5 521.5M713.5 502.5L716.5 502.5M713.5 521.5L716.5 521.5M719.5 504.5L719.5 519.5M749.5 501.5L749.5 518.5M749.5 501.5L752.5 501.5M749.5 518.5L752.5 518.5M764.5 504.5L764.5 574.5M741.5 547.5L802.5 547.5M802.5 547.5L802.5 550.5M741.5 553.5L777 553.5M759.5 555.5L759.5 594.5M759.5 555.5L762.5 555.5M759.5 594.5L762.5 594.5M713.5 573.5L713.5 594.5M713.5 573.5L716.5 573.5M713.5 594.5L716.5 594.5M751.5 602.5L802.5 602.5M751.5 602.5L751.5 605.5M802.5 602.5L802.5 605.5M841.5 560.5L893.5 560.5M841.5 560.5L841.5 563.5M893.5 560.5L893.5 563.5M834.5 504.5L834.5 640" stroke="#ff0000" stroke-width="1" fill="none" stroke-linecap="square"/><g fill="#dcdcdc" font-size="8" font-family="Liberation Sans, sans-serif" shape-rendering="auto"><text x="954" y="198.5" transform="rotate(-90 954 198.5)" textLength="8.1" lengthAdjust="spacingAndGlyphs">550</text><text x="1137" y="198.5" transform="rotate(-90 1137 198.5)" textLength="8.1" lengthAdjust="spacingAndGlyphs">550</text><text x="1319" y="198.5" transform="rotate(-90 1319 198.5)" textLength="8.1" lengthAdjust="spacingAndGlyphs">550</text><text x="966.5" y="217" transform="rotate(-90 966.5 217)" textLength="19" lengthAdjust="spacingAndGlyphs">Φ8@150</text><text x="1148.5" y="217" transform="rotate(-90 1148.5 217)" textLength="19" lengthAdjust="spacingAndGlyphs">Φ8@150</text><text x="1331.5" y="217" transform="rotate(-90 1331.5 217)" textLength="19" lengthAdjust="spacingAndGlyphs">Φ8@150</text><text x="871.6" y="212" textLength="8.4" lengthAdjust="spacingAndGlyphs">550</text><text x="1031.5" y="212" textLength="8.4" lengthAdjust="spacingAndGlyphs">550</text><text x="1213.5" y="212" textLength="8.4" lengthAdjust="spacingAndGlyphs">550</text><text x="1397.5" y="212" textLength="8.4" lengthAdjust="spacingAndGlyphs">550</text><text x="1021" y="818" transform="rotate(-90 1021 818)" textLength="8.4" lengthAdjust="spacingAndGlyphs">550</text><text x="1137" y="818" transform="rotate(-90 1137 818)" textLength="8.4" lengthAdjust="spacingAndGlyphs">550</text><text x="1319" y="818" transform="rotate(-90 1319 818)" textLength="8.4" lengthAdjust="spacingAndGlyphs">550</text><text x="1021" y="791" transform="rotate(-90 1021 791)" textLength="8.4" lengthAdjust="spacingAndGlyphs">550</text><text x="968.5" y="827" transform="rotate(-90 968.5 827)" textLength="19" lengthAdjust="spacingAndGlyphs">Φ8@150</text><text x="1148.5" y="810" transform="rotate(-90 1148.5 810)" textLength="19" lengthAdjust="spacingAndGlyphs">Φ8@150</text><text x="1331.5" y="810" transform="rotate(-90 1331.5 810)" textLength="19" lengthAdjust="spacingAndGlyphs">Φ8@150</text><text x="1047" y="795" textLength="19" lengthAdjust="spacingAndGlyphs">Φ8@150</text><text x="1031.5" y="804" textLength="8.4" lengthAdjust="spacingAndGlyphs">550</text><text x="1213.5" y="804" textLength="8.4" lengthAdjust="spacingAndGlyphs">550</text><text x="1397.5" y="804" textLength="8.4" lengthAdjust="spacingAndGlyphs">550</text><text x="950" y="803" textLength="19" lengthAdjust="spacingAndGlyphs">Φ8@150</text><text x="1144" y="310.5" textLength="19" lengthAdjust="spacingAndGlyphs">Φ8@150</text><text x="1076" y="444" textLength="19" lengthAdjust="spacingAndGlyphs">Φ8@150</text><text x="1086" y="581" textLength="19" lengthAdjust="spacingAndGlyphs">Φ8@150</text><text x="1236" y="717" textLength="19" lengthAdjust="spacingAndGlyphs">Φ8@150</text><text x="898.5" y="226.5" transform="rotate(-90 898.5 226.5)" textLength="22" lengthAdjust="spacingAndGlyphs">Φ10@200</text><text x="909" y="258.5" transform="rotate(-90 909 258.5)" textLength="10.8" lengthAdjust="spacingAndGlyphs">1050</text><text x="898.5" y="362.5" transform="rotate(-90 898.5 362.5)" textLength="22" lengthAdjust="spacingAndGlyphs">Φ10@200</text><text x="909" y="394.5" transform="rotate(-90 909 394.5)" textLength="10.8" lengthAdjust="spacingAndGlyphs">1050</text><text x="898.5" y="498.5" transform="rotate(-90 898.5 498.5)" textLength="19" lengthAdjust="spacingAndGlyphs">Φ8@150</text><text x="909" y="529.5" transform="rotate(-90 909 529.5)" textLength="10.8" lengthAdjust="spacingAndGlyphs">1000</text><text x="990.5" y="225.5" transform="rotate(-90 990.5 225.5)" textLength="19" lengthAdjust="spacingAndGlyphs">Φ8@150</text><text x="1001" y="257.5" transform="rotate(-90 1001 257.5)" textLength="10.8" lengthAdjust="spacingAndGlyphs">1000</text><text x="990.5" y="361.5" transform="rotate(-90 990.5 361.5)" textLength="19" lengthAdjust="spacingAndGlyphs">Φ8@150</text><text x="1001" y="393.5" transform="rotate(-90 1001 393.5)" textLength="10.8" lengthAdjust="spacingAndGlyphs">1000</text><text x="990.5" y="497.5" transform="rotate(-90 990.5 497.5)" textLength="19" lengthAdjust="spacingAndGlyphs">Φ8@150</text><text x="1001" y="529.5" transform="rotate(-90 1001 529.5)" textLength="10.8" lengthAdjust="spacingAndGlyphs">1000</text><text x="1080.5" y="225.5" transform="rotate(-90 1080.5 225.5)" textLength="19" lengthAdjust="spacingAndGlyphs">Φ8@150</text><text x="1091" y="257.5" transform="rotate(-90 1091 257.5)" textLength="10.8" lengthAdjust="spacingAndGlyphs">1000</text><text x="1080.5" y="361.5" transform="rotate(-90 1080.5 361.5)" textLength="19" lengthAdjust="spacingAndGlyphs">Φ8@150</text><text x="1091" y="393.5" transform="rotate(-90 1091 393.5)" textLength="10.8" lengthAdjust="spacingAndGlyphs">1000</text><text x="1080.5" y="497.5" transform="rotate(-90 1080.5 497.5)" textLength="19" lengthAdjust="spacingAndGlyphs">Φ8@150</text><text x="1091" y="529.5" transform="rotate(-90 1091 529.5)" textLength="10.8" lengthAdjust="spacingAndGlyphs">1000</text><text x="1171.5" y="225.5" transform="rotate(-90 1171.5 225.5)" textLength="19" lengthAdjust="spacingAndGlyphs">Φ8@150</text><text x="1182" y="257.5" transform="rotate(-90 1182 257.5)" textLength="10.8" lengthAdjust="spacingAndGlyphs">1000</text><text x="1171.5" y="361.5" transform="rotate(-90 1171.5 361.5)" textLength="19" lengthAdjust="spacingAndGlyphs">Φ8@150</text><text x="1182" y="393.5" transform="rotate(-90 1182 393.5)" textLength="10.8" lengthAdjust="spacingAndGlyphs">1000</text><text x="1171.5" y="497.5" transform="rotate(-90 1171.5 497.5)" textLength="19" lengthAdjust="spacingAndGlyphs">Φ8@150</text><text x="1182" y="529.5" transform="rotate(-90 1182 529.5)" textLength="10.8" lengthAdjust="spacingAndGlyphs">1000</text><text x="1262.5" y="225.5" transform="rotate(-90 1262.5 225.5)" textLength="19" lengthAdjust="spacingAndGlyphs">Φ8@150</text><text x="1273" y="257.5" transform="rotate(-90 1273 257.5)" textLength="10.8" lengthAdjust="spacingAndGlyphs">1000</text><text x="1262.5" y="361.5" transform="rotate(-90 1262.5 361.5)" textLength="19" lengthAdjust="spacingAndGlyphs">Φ8@150</text><text x="1273" y="393.5" transform="rotate(-90 1273 393.5)" textLength="10.8" lengthAdjust="spacingAndGlyphs">1000</text><text x="1262.5" y="497.5" transform="rotate(-90 1262.5 497.5)" textLength="19" lengthAdjust="spacingAndGlyphs">Φ8@150</text><text x="1273" y="529.5" transform="rotate(-90 1273 529.5)" textLength="10.8" lengthAdjust="spacingAndGlyphs">1000</text><text x="1353.5" y="226.5" transform="rotate(-90 1353.5 226.5)" textLength="22" lengthAdjust="spacingAndGlyphs">Φ10@200</text><text x="1364" y="258.5" transform="rotate(-90 1364 258.5)" textLength="10.8" lengthAdjust="spacingAndGlyphs">1050</text><text x="1353.5" y="362.5" transform="rotate(-90 1353.5 362.5)" textLength="22" lengthAdjust="spacingAndGlyphs">Φ10@200</text><text x="1364" y="394.5" transform="rotate(-90 1364 394.5)" textLength="10.8" lengthAdjust="spacingAndGlyphs">1050</text><text x="1353.5" y="498.5" transform="rotate(-90 1353.5 498.5)" textLength="22" lengthAdjust="spacingAndGlyphs">Φ10@200</text><text x="1364" y="530.5" transform="rotate(-90 1364 530.5)" textLength="10.8" lengthAdjust="spacingAndGlyphs">1050</text><text x="910.5" y="630.5" transform="rotate(-90 910.5 630.5)" textLength="22" lengthAdjust="spacingAndGlyphs">Φ10@150</text><text x="921" y="670.5" transform="rotate(-90 921 670.5)" textLength="10.8" lengthAdjust="spacingAndGlyphs">1250</text><text x="965.5" y="630.5" transform="rotate(-90 965.5 630.5)" textLength="22" lengthAdjust="spacingAndGlyphs">Φ10@150</text><text x="976" y="670.5" transform="rotate(-90 976 670.5)" textLength="10.8" lengthAdjust="spacingAndGlyphs">1250</text><text x="1021" y="626" transform="rotate(-90 1021 626)" textLength="11.2" lengthAdjust="spacingAndGlyphs">1000</text><text x="1081.5" y="634.5" transform="rotate(-90 1081.5 634.5)" textLength="19" lengthAdjust="spacingAndGlyphs">Φ8@150</text><text x="1092" y="665.5" transform="rotate(-90 1092 665.5)" textLength="10.8" lengthAdjust="spacingAndGlyphs">1000</text><text x="1171.5" y="634.5" transform="rotate(-90 1171.5 634.5)" textLength="19" lengthAdjust="spacingAndGlyphs">Φ8@150</text><text x="1182" y="665.5" transform="rotate(-90 1182 665.5)" textLength="10.8" lengthAdjust="spacingAndGlyphs">1000</text><text x="1262.5" y="634.5" transform="rotate(-90 1262.5 634.5)" textLength="19" lengthAdjust="spacingAndGlyphs">Φ8@150</text><text x="1273" y="665.5" transform="rotate(-90 1273 665.5)" textLength="10.8" lengthAdjust="spacingAndGlyphs">1000</text><text x="1353.5" y="634.5" transform="rotate(-90 1353.5 634.5)" textLength="22" lengthAdjust="spacingAndGlyphs">Φ10@200</text><text x="1364" y="666.5" transform="rotate(-90 1364 666.5)" textLength="10.8" lengthAdjust="spacingAndGlyphs">1050</text><text x="921.5" y="766.5" transform="rotate(-90 921.5 766.5)" textLength="22" lengthAdjust="spacingAndGlyphs">Φ10@150</text><text x="932" y="755" transform="rotate(-90 932 755)" textLength="11.2" lengthAdjust="spacingAndGlyphs">1250</text><text x="1081.5" y="770.5" transform="rotate(-90 1081.5 770.5)" textLength="19" lengthAdjust="spacingAndGlyphs">Φ8@150</text><text x="1092" y="801.5" transform="rotate(-90 1092 801.5)" textLength="10.8" lengthAdjust="spacingAndGlyphs">1000</text><text x="1182.5" y="770.5" transform="rotate(-90 1182.5 770.5)" textLength="19" lengthAdjust="spacingAndGlyphs">Φ8@150</text><text x="1193" y="801.5" transform="rotate(-90 1193 801.5)" textLength="10.8" lengthAdjust="spacingAndGlyphs">1000</text><text x="1262.5" y="770.5" transform="rotate(-90 1262.5 770.5)" textLength="19" lengthAdjust="spacingAndGlyphs">Φ8@150</text><text x="1273" y="801.5" transform="rotate(-90 1273 801.5)" textLength="10.8" lengthAdjust="spacingAndGlyphs">1000</text><text x="1365.5" y="770.5" transform="rotate(-90 1365.5 770.5)" textLength="22" lengthAdjust="spacingAndGlyphs">Φ10@200</text><text x="1376" y="802.5" transform="rotate(-90 1376 802.5)" textLength="10.8" lengthAdjust="spacingAndGlyphs">1250</text><text x="921.5" y="446" transform="rotate(-90 921.5 446)" textLength="19" lengthAdjust="spacingAndGlyphs">Φ8@150</text><text x="1016.5" y="446" transform="rotate(-90 1016.5 446)" textLength="19" lengthAdjust="spacingAndGlyphs">Φ8@150</text><text x="1104.5" y="500" transform="rotate(-90 1104.5 500)" textLength="19" lengthAdjust="spacingAndGlyphs">Φ8@150</text><text x="1194.5" y="500" transform="rotate(-90 1194.5 500)" textLength="19" lengthAdjust="spacingAndGlyphs">Φ8@150</text><text x="1284.5" y="500" transform="rotate(-90 1284.5 500)" textLength="19" lengthAdjust="spacingAndGlyphs">Φ8@150</text><text x="1376.5" y="500" transform="rotate(-90 1376.5 500)" textLength="19" lengthAdjust="spacingAndGlyphs">Φ8@150</text><text x="931.5" y="717" transform="rotate(-90 931.5 717)" textLength="19" lengthAdjust="spacingAndGlyphs">Φ8@150</text><text x="880.8" y="297" textLength="11.2" lengthAdjust="spacingAndGlyphs">1050</text><text x="963" y="288" textLength="22" lengthAdjust="spacingAndGlyphs">Φ10@150</text><text x="931.5" y="297" textLength="11.2" lengthAdjust="spacingAndGlyphs">1050</text><text x="1057" y="288" textLength="19" lengthAdjust="spacingAndGlyphs">Φ8@150</text><text x="1021.5" y="297" textLength="11.2" lengthAdjust="spacingAndGlyphs">1000</text><text x="1146" y="288" textLength="19" lengthAdjust="spacingAndGlyphs">Φ8@150</text><text x="1113.5" y="297" textLength="11.2" lengthAdjust="spacingAndGlyphs">1000</text><text x="1239" y="288" textLength="19" lengthAdjust="spacingAndGlyphs">Φ8@150</text><text x="1202.5" y="297" textLength="11.2" lengthAdjust="spacingAndGlyphs">1000</text><text x="1326" y="288" textLength="22" lengthAdjust="spacingAndGlyphs">Φ10@150</text><text x="1294.5" y="297" textLength="11.2" lengthAdjust="spacingAndGlyphs">1050</text><text x="1386.5" y="297" textLength="11.2" lengthAdjust="spacingAndGlyphs">1050</text><text x="875" y="424" textLength="19" lengthAdjust="spacingAndGlyphs">Φ8@150</text><text x="841.5" y="433" textLength="11.2" lengthAdjust="spacingAndGlyphs">1000</text><text x="965" y="424" textLength="19" lengthAdjust="spacingAndGlyphs">Φ8@150</text><text x="932.5" y="433" textLength="11.2" lengthAdjust="spacingAndGlyphs">1000</text><text x="1057" y="424" textLength="19" lengthAdjust="spacingAndGlyphs">Φ8@150</text><text x="1022.5" y="433" textLength="11.2" lengthAdjust="spacingAndGlyphs">1000</text><text x="1146" y="424" textLength="19" lengthAdjust="spacingAndGlyphs">Φ8@150</text><text x="1113.5" y="433" textLength="11.2" lengthAdjust="spacingAndGlyphs">1000</text><text x="1238" y="424" textLength="19" lengthAdjust="spacingAndGlyphs">Φ8@150</text><text x="1203.5" y="433" textLength="11.2" lengthAdjust="spacingAndGlyphs">1000</text><text x="1326" y="424" textLength="22" lengthAdjust="spacingAndGlyphs">Φ10@150</text><text x="1294.5" y="433" textLength="11.2" lengthAdjust="spacingAndGlyphs">1050</text><text x="1386.5" y="433" textLength="11.2" lengthAdjust="spacingAndGlyphs">1050</text><text x="875" y="560" textLength="19" lengthAdjust="spacingAndGlyphs">Φ8@150</text><text x="841.5" y="569" textLength="11.2" lengthAdjust="spacingAndGlyphs">1000</text><text x="962" y="560" textLength="22" lengthAdjust="spacingAndGlyphs">Φ10@200</text><text x="932.5" y="569" textLength="11.2" lengthAdjust="spacingAndGlyphs">1000</text><text x="1054" y="560" textLength="22" lengthAdjust="spacingAndGlyphs">Φ10@200</text><text x="1022.5" y="569" textLength="11.2" lengthAdjust="spacingAndGlyphs">1000</text><text x="1146" y="560" textLength="19" lengthAdjust="spacingAndGlyphs">Φ8@150</text><text x="1113.5" y="569" textLength="11.2" lengthAdjust="spacingAndGlyphs">1000</text><text x="1238" y="560" textLength="19" lengthAdjust="spacingAndGlyphs">Φ8@150</text><text x="1203.5" y="569" textLength="11.2" lengthAdjust="spacingAndGlyphs">1000</text><text x="1326" y="560" textLength="22" lengthAdjust="spacingAndGlyphs">Φ10@150</text><text x="1294.5" y="569" textLength="11.2" lengthAdjust="spacingAndGlyphs">1050</text><text x="1386.5" y="569" textLength="11.2" lengthAdjust="spacingAndGlyphs">1050</text><text x="878" y="696" textLength="22" lengthAdjust="spacingAndGlyphs">Φ10@150</text><text x="836.5" y="705" textLength="11.2" lengthAdjust="spacingAndGlyphs">1250</text><text x="945.5" y="705" textLength="11.2" lengthAdjust="spacingAndGlyphs">1250</text><text x="1065.8" y="705" textLength="11.2" lengthAdjust="spacingAndGlyphs">1000</text><text x="1143" y="696" textLength="22" lengthAdjust="spacingAndGlyphs">Φ10@150</text><text x="1113.5" y="705" textLength="11.2" lengthAdjust="spacingAndGlyphs">1000</text><text x="1239" y="696" textLength="19" lengthAdjust="spacingAndGlyphs">Φ8@150</text><text x="1202.5" y="705" textLength="11.2" lengthAdjust="spacingAndGlyphs">1000</text><text x="1326" y="696" textLength="22" lengthAdjust="spacingAndGlyphs">Φ10@150</text><text x="1294.5" y="705" textLength="11.2" lengthAdjust="spacingAndGlyphs">1050</text><text x="1386.5" y="705" textLength="11.2" lengthAdjust="spacingAndGlyphs">1050</text><text x="590" y="470.5" transform="rotate(-90 590 470.5)" textLength="8.1" lengthAdjust="spacingAndGlyphs">550</text><text x="601.5" y="490" transform="rotate(-90 601.5 490)" textLength="19" lengthAdjust="spacingAndGlyphs">Φ8@150</text><text x="508.6" y="484" textLength="8.4" lengthAdjust="spacingAndGlyphs">550</text><text x="667.5" y="484" textLength="8.4" lengthAdjust="spacingAndGlyphs">550</text><text x="557.5" y="718" transform="rotate(-90 557.5 718)" textLength="19" lengthAdjust="spacingAndGlyphs">Φ8@150</text><text x="649.5" y="718" transform="rotate(-90 649.5 718)" textLength="19" lengthAdjust="spacingAndGlyphs">Φ8@150</text><text x="740.5" y="754" transform="rotate(-90 740.5 754)" textLength="19" lengthAdjust="spacingAndGlyphs">Φ8@150</text><text x="832.5" y="718" transform="rotate(-90 832.5 718)" textLength="19" lengthAdjust="spacingAndGlyphs">Φ8@150</text><text x="534.5" y="498.5" transform="rotate(-90 534.5 498.5)" textLength="22" lengthAdjust="spacingAndGlyphs">Φ10@200</text><text x="545" y="530.5" transform="rotate(-90 545 530.5)" textLength="10.8" lengthAdjust="spacingAndGlyphs">1050</text><text x="534.5" y="634.5" transform="rotate(-90 534.5 634.5)" textLength="22" lengthAdjust="spacingAndGlyphs">Φ10@200</text><text x="545" y="666.5" transform="rotate(-90 545 666.5)" textLength="10.8" lengthAdjust="spacingAndGlyphs">1050</text><text x="534.5" y="770.5" transform="rotate(-90 534.5 770.5)" textLength="22" lengthAdjust="spacingAndGlyphs">Φ10@200</text><text x="545" y="802.5" transform="rotate(-90 545 802.5)" textLength="10.8" lengthAdjust="spacingAndGlyphs">1050</text><text x="627.5" y="498.5" transform="rotate(-90 627.5 498.5)" textLength="19" lengthAdjust="spacingAndGlyphs">Φ8@150</text><text x="638" y="529.5" transform="rotate(-90 638 529.5)" textLength="10.8" lengthAdjust="spacingAndGlyphs">1000</text><text x="627.5" y="634.5" transform="rotate(-90 627.5 634.5)" textLength="19" lengthAdjust="spacingAndGlyphs">Φ8@150</text><text x="638" y="665.5" transform="rotate(-90 638 665.5)" textLength="10.8" lengthAdjust="spacingAndGlyphs">1000</text><text x="627.5" y="770.5" transform="rotate(-90 627.5 770.5)" textLength="19" lengthAdjust="spacingAndGlyphs">Φ8@150</text><text x="638" y="801.5" transform="rotate(-90 638 801.5)" textLength="10.8" lengthAdjust="spacingAndGlyphs">1000</text><text x="717.5" y="634.5" transform="rotate(-90 717.5 634.5)" textLength="19" lengthAdjust="spacingAndGlyphs">Φ8@150</text><text x="728" y="665.5" transform="rotate(-90 728 665.5)" textLength="10.8" lengthAdjust="spacingAndGlyphs">1000</text><text x="717.5" y="770.5" transform="rotate(-90 717.5 770.5)" textLength="19" lengthAdjust="spacingAndGlyphs">Φ8@150</text><text x="728" y="801.5" transform="rotate(-90 728 801.5)" textLength="10.8" lengthAdjust="spacingAndGlyphs">1000</text><text x="808.5" y="634.5" transform="rotate(-90 808.5 634.5)" textLength="19" lengthAdjust="spacingAndGlyphs">Φ8@150</text><text x="819" y="665.5" transform="rotate(-90 819 665.5)" textLength="10.8" lengthAdjust="spacingAndGlyphs">1000</text><text x="810.5" y="768.5" transform="rotate(-90 810.5 768.5)" textLength="19" lengthAdjust="spacingAndGlyphs">Φ8@150</text><text x="821" y="802.5" transform="rotate(-90 821 802.5)" textLength="10.8" lengthAdjust="spacingAndGlyphs">1050</text><text x="545" y="899.5" transform="rotate(-90 545 899.5)" textLength="11.2" lengthAdjust="spacingAndGlyphs">1050</text><text x="638" y="899.5" transform="rotate(-90 638 899.5)" textLength="11.2" lengthAdjust="spacingAndGlyphs">1000</text><text x="728" y="899.5" transform="rotate(-90 728 899.5)" textLength="11.2" lengthAdjust="spacingAndGlyphs">1000</text><text x="820" y="899.5" transform="rotate(-90 820 899.5)" textLength="11.2" lengthAdjust="spacingAndGlyphs">1050</text><text x="516.8" y="569" textLength="11.2" lengthAdjust="spacingAndGlyphs">1050</text><text x="600" y="560" textLength="22" lengthAdjust="spacingAndGlyphs">Φ10@150</text><text x="568.5" y="569" textLength="11.2" lengthAdjust="spacingAndGlyphs">1050</text><text x="516.8" y="705" textLength="11.2" lengthAdjust="spacingAndGlyphs">1050</text><text x="600" y="696" textLength="22" lengthAdjust="spacingAndGlyphs">Φ10@150</text><text x="568.5" y="705" textLength="11.2" lengthAdjust="spacingAndGlyphs">1050</text><text x="516.8" y="843" textLength="11.2" lengthAdjust="spacingAndGlyphs">1050</text><text x="600" y="834" textLength="22" lengthAdjust="spacingAndGlyphs">Φ10@150</text><text x="568.5" y="843" textLength="11.2" lengthAdjust="spacingAndGlyphs">1050</text><text x="693" y="512" textLength="19" lengthAdjust="spacingAndGlyphs">Φ8@150</text><text x="659.5" y="521" textLength="11.2" lengthAdjust="spacingAndGlyphs">1000</text><text x="659.5" y="556" textLength="11.2" lengthAdjust="spacingAndGlyphs">1000</text><text x="690" y="602" textLength="22" lengthAdjust="spacingAndGlyphs">Φ10@150</text><text x="659.5" y="611" textLength="11.2" lengthAdjust="spacingAndGlyphs">1000</text><text x="693" y="696" textLength="19" lengthAdjust="spacingAndGlyphs">Φ8@150</text><text x="659.5" y="705" textLength="11.2" lengthAdjust="spacingAndGlyphs">1000</text><text x="784" y="696" textLength="19" lengthAdjust="spacingAndGlyphs">Φ8@150</text><text x="751.5" y="705" textLength="11.2" lengthAdjust="spacingAndGlyphs">1000</text><text x="690" y="834" textLength="22" lengthAdjust="spacingAndGlyphs">Φ10@200</text><text x="659.5" y="843" textLength="11.2" lengthAdjust="spacingAndGlyphs">1000</text><text x="782" y="834" textLength="22" lengthAdjust="spacingAndGlyphs">Φ10@150</text><text x="749.5" y="843" textLength="11.2" lengthAdjust="spacingAndGlyphs">1050</text><text x="875" y="800" textLength="22" lengthAdjust="spacingAndGlyphs">Φ10@150</text><text x="842.5" y="809" textLength="11.2" lengthAdjust="spacingAndGlyphs">1050</text><text x="842.5" y="878" textLength="11.2" lengthAdjust="spacingAndGlyphs">1050</text><text x="598" y="581" textLength="19" lengthAdjust="spacingAndGlyphs">Φ8@150</text><text x="722" y="610" textLength="19" lengthAdjust="spacingAndGlyphs">Φ8@150</text><text x="730" y="717" textLength="19" lengthAdjust="spacingAndGlyphs">Φ8@150</text><text x="690" y="855" textLength="19" lengthAdjust="spacingAndGlyphs">Φ8@150</text><text x="790" y="382.5" transform="rotate(-90 790 382.5)" textLength="8.1" lengthAdjust="spacingAndGlyphs">650</text><text x="845" y="381.5" transform="rotate(-90 845 381.5)" textLength="8.1" lengthAdjust="spacingAndGlyphs">600</text><text x="788.5" y="444" transform="rotate(-90 788.5 444)" textLength="19" lengthAdjust="spacingAndGlyphs">Φ8@150</text><text x="844.5" y="462" transform="rotate(-90 844.5 462)" textLength="19" lengthAdjust="spacingAndGlyphs">Φ8@150</text><text x="766.6" y="432" textLength="8.4" lengthAdjust="spacingAndGlyphs">650</text><text x="813" y="423" textLength="19" lengthAdjust="spacingAndGlyphs">Φ8@150</text><text x="796.5" y="432" textLength="8.4" lengthAdjust="spacingAndGlyphs">650</text><text x="793.5" y="498.5" transform="rotate(-90 793.5 498.5)" textLength="19" lengthAdjust="spacingAndGlyphs">Φ8@150</text><text x="804" y="529.5" transform="rotate(-90 804 529.5)" textLength="10.8" lengthAdjust="spacingAndGlyphs">1000</text><text x="838.5" y="498.5" transform="rotate(-90 838.5 498.5)" textLength="19" lengthAdjust="spacingAndGlyphs">Φ8@150</text><text x="849" y="529.5" transform="rotate(-90 849 529.5)" textLength="10.8" lengthAdjust="spacingAndGlyphs">1000</text><text x="765.5" y="505.5" transform="rotate(-90 765.5 505.5)" textLength="19" lengthAdjust="spacingAndGlyphs">Φ8@150</text><text x="776" y="521.5" transform="rotate(-90 776 521.5)" textLength="8.1" lengthAdjust="spacingAndGlyphs">500</text><text x="784" y="512" textLength="19" lengthAdjust="spacingAndGlyphs">Φ8@150</text><text x="727.5" y="521" textLength="8.4" lengthAdjust="spacingAndGlyphs">500</text><text x="791.5" y="521" textLength="11.2" lengthAdjust="spacingAndGlyphs">1000</text><text x="711.5" y="522.5" transform="rotate(-90 711.5 522.5)" textLength="19" lengthAdjust="spacingAndGlyphs">Φ8@150</text><text x="758" y="517.5" transform="rotate(-90 758 517.5)" textLength="8.1" lengthAdjust="spacingAndGlyphs">500</text><text x="762.5" y="548" transform="rotate(-90 762.5 548)" textLength="19" lengthAdjust="spacingAndGlyphs">Φ8@150</text><text x="784" y="547" textLength="19" lengthAdjust="spacingAndGlyphs">Φ8@150</text><text x="790.8" y="556" textLength="11.2" lengthAdjust="spacingAndGlyphs">1000</text><text x="731" y="552" textLength="19" lengthAdjust="spacingAndGlyphs">Φ8@150</text><text x="757.5" y="575.5" transform="rotate(-90 757.5 575.5)" textLength="19" lengthAdjust="spacingAndGlyphs">Φ8@150</text><text x="768" y="593.5" transform="rotate(-90 768 593.5)" textLength="8.1" lengthAdjust="spacingAndGlyphs">750</text><text x="722" y="593.5" transform="rotate(-90 722 593.5)" textLength="8.1" lengthAdjust="spacingAndGlyphs">750</text><text x="784" y="602" textLength="19" lengthAdjust="spacingAndGlyphs">Φ8@150</text><text x="751.5" y="611" textLength="11.2" lengthAdjust="spacingAndGlyphs">1000</text><text x="875" y="560" textLength="19" lengthAdjust="spacingAndGlyphs">Φ8@150</text><text x="841.5" y="569" textLength="11.2" lengthAdjust="spacingAndGlyphs">1000</text></g><g font-family="Liberation Sans, sans-serif" shape-rendering="auto"><text x="1486" y="707" fill="#ff00ff" font-size="15" textLength="28" lengthAdjust="spacingAndGlyphs">附注:</text><text x="1486" y="728.5" fill="#f0f0f0" font-size="12" textLength="136" lengthAdjust="spacingAndGlyphs">1. 板厚及板面标高详结构平面布置图。</text><text x="1486" y="745.5" fill="#f0f0f0" font-size="12" textLength="225" lengthAdjust="spacingAndGlyphs">2. 除特殊注明外，现浇楼板板面钢筋采用分离式布置，默认板</text><text x="1494.5" y="762.5" fill="#f0f0f0" font-size="12" textLength="219" lengthAdjust="spacingAndGlyphs">面钢筋为Φ8@200；现浇楼板板底钢筋采用双向通长布置，默认</text><text x="1494.5" y="779.5" fill="#f0f0f0" font-size="12" textLength="80" lengthAdjust="spacingAndGlyphs">认板底钢筋为Φ8@200。</text><text x="1486" y="796.5" fill="#f0f0f0" font-size="12" textLength="210" lengthAdjust="spacingAndGlyphs">3. 板钢筋遇洞边截断，洞边无梁时按结构总说明设加强筋。</text></g></svg></body></html>
